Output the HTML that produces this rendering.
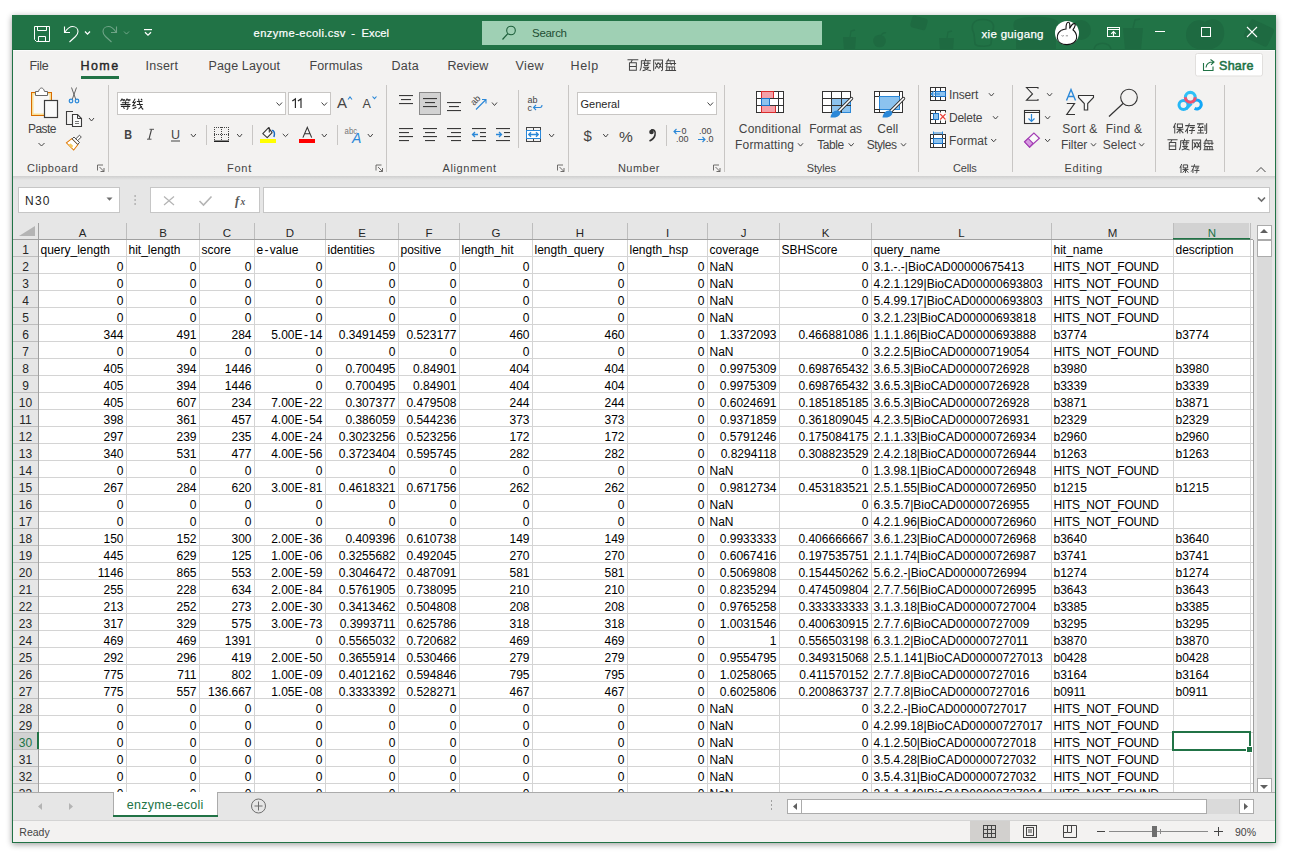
<!DOCTYPE html><html><head><meta charset="utf-8"><style>html,body{margin:0;padding:0;background:#fff;width:1289px;height:859px;overflow:hidden}</style></head><body><svg width="1289" height="859" viewBox="0 0 1289 859" style="display:block;font-family:'Liberation Sans',sans-serif"><defs><filter id="sh" x="-5%" y="-5%" width="110%" height="110%"><feGaussianBlur stdDeviation="3.2"/></filter><linearGradient id="rs" x1="0" y1="0" x2="0" y2="1"><stop offset="0" stop-color="#cfcfcf"/><stop offset="1" stop-color="#e6e6e6"/></linearGradient></defs><rect x="12" y="16.5" width="1264" height="828" fill="#000" opacity="0.38" filter="url(#sh)"/><rect x="12" y="15" width="1264" height="828" fill="#217346" /><rect x="12" y="15" width="1264" height="35" fill="#217346" /><rect x="13" y="50" width="1262" height="126" fill="#f3f2f1" /><rect x="13" y="49" width="1262" height="1" fill="#1f6b41" /><rect x="13" y="50" width="1262" height="1" fill="#fbfbfb" /><rect x="13" y="176" width="1262" height="47" fill="#e6e6e6" /><rect x="13" y="176" width="1262" height="4" fill="url(#rs)" /><rect x="13" y="223" width="1262" height="569" fill="#e6e6e6" /><rect x="13" y="792" width="1262" height="28" fill="#e6e6e6" /><rect x="13" y="792" width="1262" height="1" fill="#ababab" /><rect x="13" y="820" width="1262" height="1" fill="#d4d4d4" /><rect x="13" y="821" width="1262" height="21" fill="#f3f2f1" /><clipPath id="tbclip"><rect x="13" y="15" width="1262" height="34"/></clipPath><g fill="#1e6a41" stroke="none" clip-path="url(#tbclip)"><path d="M843 37 H856 L855 50 H844 Z"/><path d="M850 37 L851 31 L855 30" fill="none" stroke="#1e6a41" stroke-width="1.3"/><circle cx="879.5" cy="41" r="6.3"/><path d="M881 35 Q884 32 886 33" fill="none" stroke="#1e6a41" stroke-width="1.3"/><rect x="911" y="17" width="16" height="12" rx="3" transform="rotate(15 919 23)"/><path d="M939 38 H954 L953 50 H940 Z"/><path d="M947 38 L948 32 L952 31" fill="none" stroke="#1e6a41" stroke-width="1.3"/><path d="M973 24 C976 18 990 18 993 24 C995 28 992 31 992 34 L991 44 C990 47 977 47 975 44 L974 34 C973 31 971 28 973 24 Z" fill="none" stroke="#1e6a41" stroke-width="1.6"/><path d="M1014 22 C1016 15 1055 15 1058 22 C1060 28 1056 32 1056 36 V50 H1016 V36 C1016 32 1012 28 1014 22 Z"/><circle cx="1081" cy="30" r="10"/><path d="M1094 50 C1094 41 1111 41 1111 50 Z" fill="none" stroke="#1e6a41" stroke-width="1.6"/><path d="M1123 28 H1143 L1141 50 H1125 Z"/><path d="M1133 28 L1135 20 L1140 19" fill="none" stroke="#1e6a41" stroke-width="1.5"/><path d="M1205 22 C1215 15 1226 22 1224 36 C1222 47 1212 50 1205 50 C1196 50 1186 46 1186 35 C1186 24 1196 17 1205 22 Z"/><rect x="1246" y="23" width="26" height="20" rx="3" transform="rotate(25 1259 33)"/></g><rect x="482" y="21" width="340" height="24" fill="#9fd0b4" /><text x="253.6" y="37" font-size="11.2" fill="#fff" text-anchor="start" font-weight="normal" stroke="#fff" stroke-width="0.2" textLength="91.8" lengthAdjust="spacing">enzyme-ecoli.csv</text><text x="351.2" y="37" font-size="11.2" fill="#fff" text-anchor="start" font-weight="normal" stroke="#fff" stroke-width="0.2">-</text><text x="361.6" y="37" font-size="11.2" fill="#fff" text-anchor="start" font-weight="normal" stroke="#fff" stroke-width="0.2" textLength="27.4" lengthAdjust="spacing">Excel</text><text x="532" y="37" font-size="11.5" fill="#1e4e33" text-anchor="start" font-weight="normal"  textLength="35" lengthAdjust="spacing">Search</text><text x="981.5" y="38" font-size="11.5" fill="#fff" text-anchor="start" font-weight="normal" stroke="#fff" stroke-width="0.25" textLength="62" lengthAdjust="spacing">xie guigang</text><text x="29.5" y="70" font-size="12.5" fill="#444" text-anchor="start" font-weight="normal"  textLength="19.3" lengthAdjust="spacing">File</text><text x="80.5" y="70" font-size="12.5" fill="#262626" text-anchor="start" font-weight="normal" stroke="#262626" stroke-width="0.4" textLength="37.6" lengthAdjust="spacing">Home</text><text x="145.5" y="70" font-size="12.5" fill="#444" text-anchor="start" font-weight="normal"  textLength="32.5" lengthAdjust="spacing">Insert</text><text x="208.5" y="70" font-size="12.5" fill="#444" text-anchor="start" font-weight="normal"  textLength="71.6" lengthAdjust="spacing">Page Layout</text><text x="309.5" y="70" font-size="12.5" fill="#444" text-anchor="start" font-weight="normal"  textLength="53" lengthAdjust="spacing">Formulas</text><text x="391.5" y="70" font-size="12.5" fill="#444" text-anchor="start" font-weight="normal"  textLength="27.1" lengthAdjust="spacing">Data</text><text x="447.5" y="70" font-size="12.5" fill="#444" text-anchor="start" font-weight="normal"  textLength="40.7" lengthAdjust="spacing">Review</text><text x="515.5" y="70" font-size="12.5" fill="#444" text-anchor="start" font-weight="normal"  textLength="28" lengthAdjust="spacing">View</text><text x="570.5" y="70" font-size="12.5" fill="#444" text-anchor="start" font-weight="normal"  textLength="27.7" lengthAdjust="spacing">Help</text><rect x="81" y="76" width="38" height="3" fill="#217346" /><rect x="1195.5" y="53.5" width="67" height="22.5" fill="#fff" stroke="#e1dfdd" stroke-width="1" rx="2"/><text x="1219" y="70" font-size="12.5" fill="#217346" text-anchor="start" font-weight="normal" stroke="#217346" stroke-width="0.55" textLength="34.5" lengthAdjust="spacing">Share</text><text x="27.0" y="172" font-size="11" fill="#444" text-anchor="start" font-weight="normal"  textLength="50.9" lengthAdjust="spacing">Clipboard</text><text x="226.9" y="172" font-size="11" fill="#444" text-anchor="start" font-weight="normal"  textLength="24.3" lengthAdjust="spacing">Font</text><text x="442.59999999999997" y="172" font-size="11" fill="#444" text-anchor="start" font-weight="normal"  textLength="53.5" lengthAdjust="spacing">Alignment</text><text x="617.9" y="172" font-size="11" fill="#444" text-anchor="start" font-weight="normal"  textLength="41.6" lengthAdjust="spacing">Number</text><text x="806.6999999999999" y="172" font-size="11" fill="#444" text-anchor="start" font-weight="normal"  textLength="29.3" lengthAdjust="spacing">Styles</text><text x="952.9" y="172" font-size="11" fill="#444" text-anchor="start" font-weight="normal"  textLength="23.9" lengthAdjust="spacing">Cells</text><text x="1064.6000000000001" y="172" font-size="11" fill="#444" text-anchor="start" font-weight="normal"  textLength="37.5" lengthAdjust="spacing">Editing</text><rect x="108" y="85" width="1" height="87" fill="#c8c6c4" /><rect x="386" y="85" width="1" height="87" fill="#c8c6c4" /><rect x="568" y="85" width="1" height="87" fill="#c8c6c4" /><rect x="724" y="85" width="1" height="87" fill="#c8c6c4" /><rect x="918" y="85" width="1" height="87" fill="#c8c6c4" /><rect x="1012" y="85" width="1" height="87" fill="#c8c6c4" /><rect x="1155" y="85" width="1" height="87" fill="#c8c6c4" /><rect x="1224" y="85" width="1" height="87" fill="#c8c6c4" /><text x="27.9" y="133" font-size="12" fill="#444" text-anchor="start" font-weight="normal"  textLength="28.6" lengthAdjust="spacing">Paste</text><text x="738.8" y="133" font-size="12" fill="#444" text-anchor="start" font-weight="normal"  textLength="62.2" lengthAdjust="spacing">Conditional</text><text x="735" y="149" font-size="12" fill="#444" text-anchor="start" font-weight="normal"  textLength="59" lengthAdjust="spacing">Formatting</text><text x="809.3" y="133" font-size="12" fill="#444" text-anchor="start" font-weight="normal"  textLength="52.8" lengthAdjust="spacing">Format as</text><text x="817.2" y="149" font-size="12" fill="#444" text-anchor="start" font-weight="normal"  textLength="26.9" lengthAdjust="spacing">Table</text><text x="877.3" y="133" font-size="12" fill="#444" text-anchor="start" font-weight="normal"  textLength="20.9" lengthAdjust="spacing">Cell</text><text x="866.8" y="149" font-size="12" fill="#444" text-anchor="start" font-weight="normal"  textLength="30.1" lengthAdjust="spacing">Styles</text><text x="949" y="99" font-size="12" fill="#444" text-anchor="start" font-weight="normal"  textLength="29.3" lengthAdjust="spacing">Insert</text><text x="949" y="122" font-size="12" fill="#444" text-anchor="start" font-weight="normal"  textLength="33.4" lengthAdjust="spacing">Delete</text><text x="949" y="145" font-size="12" fill="#444" text-anchor="start" font-weight="normal"  textLength="38.3" lengthAdjust="spacing">Format</text><text x="1062.3" y="133" font-size="12" fill="#444" text-anchor="start" font-weight="normal"  textLength="34.9" lengthAdjust="spacing">Sort &amp;</text><text x="1061.1" y="149" font-size="12" fill="#444" text-anchor="start" font-weight="normal"  textLength="26.1" lengthAdjust="spacing">Filter</text><text x="1105.7" y="133" font-size="12" fill="#444" text-anchor="start" font-weight="normal"  textLength="36.4" lengthAdjust="spacing">Find &amp;</text><text x="1102.7" y="149" font-size="12" fill="#444" text-anchor="start" font-weight="normal"  textLength="33.5" lengthAdjust="spacing">Select</text><rect x="117.5" y="92.5" width="168" height="22" fill="#fff" stroke="#c8c6c4"/><rect x="288.5" y="92.5" width="42" height="22" fill="#fff" stroke="#c8c6c4"/><path d="M292.3 101 L295.4 98.9 V108 M297.9 101 L301 98.9 V108" fill="none" stroke="#262626" stroke-width="1.15"/><rect x="577.5" y="92.5" width="139" height="22" fill="#fff" stroke="#c8c6c4"/><text x="580.5" y="108" font-size="11" fill="#262626" text-anchor="start" font-weight="normal" >General</text><rect x="419.5" y="92.5" width="21" height="22" fill="#d2d2d2" stroke="#8a8a8a"/><rect x="18.5" y="187.5" width="101" height="25" fill="#fff" stroke="#c6c6c6"/><text x="25" y="205" font-size="12" fill="#262626" text-anchor="start" font-weight="normal"  textLength="24.5" lengthAdjust="spacing">N30</text><rect x="150.5" y="187.5" width="109" height="25" fill="#fff" stroke="#c6c6c6"/><rect x="263.5" y="187.5" width="1006" height="25" fill="#fff" stroke="#c6c6c6"/><rect x="39" y="240" width="1214" height="552" fill="#fff" /><rect x="13" y="223" width="1240" height="16" fill="#e6e6e6" /><rect x="13" y="239" width="25" height="553" fill="#e6e6e6" /><rect x="1173" y="223" width="76" height="16" fill="#d2d2d2" /><rect x="13" y="733" width="25" height="16" fill="#d2d2d2" /><rect x="126" y="240" width="1" height="552" fill="#d4d4d4" /><rect x="126" y="223" width="1" height="16" fill="#bdbdbd" /><rect x="199" y="240" width="1" height="552" fill="#d4d4d4" /><rect x="199" y="223" width="1" height="16" fill="#bdbdbd" /><rect x="254" y="240" width="1" height="552" fill="#d4d4d4" /><rect x="254" y="223" width="1" height="16" fill="#bdbdbd" /><rect x="325" y="240" width="1" height="552" fill="#d4d4d4" /><rect x="325" y="223" width="1" height="16" fill="#bdbdbd" /><rect x="398" y="240" width="1" height="552" fill="#d4d4d4" /><rect x="398" y="223" width="1" height="16" fill="#bdbdbd" /><rect x="459" y="240" width="1" height="552" fill="#d4d4d4" /><rect x="459" y="223" width="1" height="16" fill="#bdbdbd" /><rect x="532" y="240" width="1" height="552" fill="#d4d4d4" /><rect x="532" y="223" width="1" height="16" fill="#bdbdbd" /><rect x="627" y="240" width="1" height="552" fill="#d4d4d4" /><rect x="627" y="223" width="1" height="16" fill="#bdbdbd" /><rect x="707" y="240" width="1" height="552" fill="#d4d4d4" /><rect x="707" y="223" width="1" height="16" fill="#bdbdbd" /><rect x="779" y="240" width="1" height="552" fill="#d4d4d4" /><rect x="779" y="223" width="1" height="16" fill="#bdbdbd" /><rect x="871" y="240" width="1" height="552" fill="#d4d4d4" /><rect x="871" y="223" width="1" height="16" fill="#bdbdbd" /><rect x="1051" y="240" width="1" height="552" fill="#d4d4d4" /><rect x="1051" y="223" width="1" height="16" fill="#bdbdbd" /><rect x="1173" y="240" width="1" height="552" fill="#d4d4d4" /><rect x="1173" y="223" width="1" height="16" fill="#bdbdbd" /><rect x="1250" y="240" width="1" height="552" fill="#d4d4d4" /><rect x="1250" y="223" width="1" height="16" fill="#bdbdbd" /><rect x="1253" y="240" width="1" height="552" fill="#a0a0a0" /><rect x="39" y="256" width="1214" height="1" fill="#d4d4d4" /><rect x="13" y="256" width="25" height="1" fill="#bdbdbd" /><rect x="39" y="273" width="1214" height="1" fill="#d4d4d4" /><rect x="13" y="273" width="25" height="1" fill="#bdbdbd" /><rect x="39" y="290" width="1214" height="1" fill="#d4d4d4" /><rect x="13" y="290" width="25" height="1" fill="#bdbdbd" /><rect x="39" y="307" width="1214" height="1" fill="#d4d4d4" /><rect x="13" y="307" width="25" height="1" fill="#bdbdbd" /><rect x="39" y="324" width="1214" height="1" fill="#d4d4d4" /><rect x="13" y="324" width="25" height="1" fill="#bdbdbd" /><rect x="39" y="341" width="1214" height="1" fill="#d4d4d4" /><rect x="13" y="341" width="25" height="1" fill="#bdbdbd" /><rect x="39" y="358" width="1214" height="1" fill="#d4d4d4" /><rect x="13" y="358" width="25" height="1" fill="#bdbdbd" /><rect x="39" y="375" width="1214" height="1" fill="#d4d4d4" /><rect x="13" y="375" width="25" height="1" fill="#bdbdbd" /><rect x="39" y="392" width="1214" height="1" fill="#d4d4d4" /><rect x="13" y="392" width="25" height="1" fill="#bdbdbd" /><rect x="39" y="409" width="1214" height="1" fill="#d4d4d4" /><rect x="13" y="409" width="25" height="1" fill="#bdbdbd" /><rect x="39" y="426" width="1214" height="1" fill="#d4d4d4" /><rect x="13" y="426" width="25" height="1" fill="#bdbdbd" /><rect x="39" y="443" width="1214" height="1" fill="#d4d4d4" /><rect x="13" y="443" width="25" height="1" fill="#bdbdbd" /><rect x="39" y="460" width="1214" height="1" fill="#d4d4d4" /><rect x="13" y="460" width="25" height="1" fill="#bdbdbd" /><rect x="39" y="477" width="1214" height="1" fill="#d4d4d4" /><rect x="13" y="477" width="25" height="1" fill="#bdbdbd" /><rect x="39" y="494" width="1214" height="1" fill="#d4d4d4" /><rect x="13" y="494" width="25" height="1" fill="#bdbdbd" /><rect x="39" y="511" width="1214" height="1" fill="#d4d4d4" /><rect x="13" y="511" width="25" height="1" fill="#bdbdbd" /><rect x="39" y="528" width="1214" height="1" fill="#d4d4d4" /><rect x="13" y="528" width="25" height="1" fill="#bdbdbd" /><rect x="39" y="545" width="1214" height="1" fill="#d4d4d4" /><rect x="13" y="545" width="25" height="1" fill="#bdbdbd" /><rect x="39" y="562" width="1214" height="1" fill="#d4d4d4" /><rect x="13" y="562" width="25" height="1" fill="#bdbdbd" /><rect x="39" y="579" width="1214" height="1" fill="#d4d4d4" /><rect x="13" y="579" width="25" height="1" fill="#bdbdbd" /><rect x="39" y="596" width="1214" height="1" fill="#d4d4d4" /><rect x="13" y="596" width="25" height="1" fill="#bdbdbd" /><rect x="39" y="613" width="1214" height="1" fill="#d4d4d4" /><rect x="13" y="613" width="25" height="1" fill="#bdbdbd" /><rect x="39" y="630" width="1214" height="1" fill="#d4d4d4" /><rect x="13" y="630" width="25" height="1" fill="#bdbdbd" /><rect x="39" y="647" width="1214" height="1" fill="#d4d4d4" /><rect x="13" y="647" width="25" height="1" fill="#bdbdbd" /><rect x="39" y="664" width="1214" height="1" fill="#d4d4d4" /><rect x="13" y="664" width="25" height="1" fill="#bdbdbd" /><rect x="39" y="681" width="1214" height="1" fill="#d4d4d4" /><rect x="13" y="681" width="25" height="1" fill="#bdbdbd" /><rect x="39" y="698" width="1214" height="1" fill="#d4d4d4" /><rect x="13" y="698" width="25" height="1" fill="#bdbdbd" /><rect x="39" y="715" width="1214" height="1" fill="#d4d4d4" /><rect x="13" y="715" width="25" height="1" fill="#bdbdbd" /><rect x="39" y="732" width="1214" height="1" fill="#d4d4d4" /><rect x="13" y="732" width="25" height="1" fill="#bdbdbd" /><rect x="39" y="749" width="1214" height="1" fill="#d4d4d4" /><rect x="13" y="749" width="25" height="1" fill="#bdbdbd" /><rect x="39" y="766" width="1214" height="1" fill="#d4d4d4" /><rect x="13" y="766" width="25" height="1" fill="#bdbdbd" /><rect x="39" y="783" width="1214" height="1" fill="#d4d4d4" /><rect x="13" y="783" width="25" height="1" fill="#bdbdbd" /><rect x="13" y="239" width="1240" height="1" fill="#a0a0a0" /><rect x="38" y="223" width="1" height="569" fill="#a0a0a0" /><path d="M19 236 L35 236 L35 226 Z" fill="#b4b4b4"/><text x="82.5" y="236.5" font-size="11.5" fill="#262626" text-anchor="middle" font-weight="normal" >A</text><text x="163.0" y="236.5" font-size="11.5" fill="#262626" text-anchor="middle" font-weight="normal" >B</text><text x="227.0" y="236.5" font-size="11.5" fill="#262626" text-anchor="middle" font-weight="normal" >C</text><text x="290.0" y="236.5" font-size="11.5" fill="#262626" text-anchor="middle" font-weight="normal" >D</text><text x="362.0" y="236.5" font-size="11.5" fill="#262626" text-anchor="middle" font-weight="normal" >E</text><text x="429.0" y="236.5" font-size="11.5" fill="#262626" text-anchor="middle" font-weight="normal" >F</text><text x="496.0" y="236.5" font-size="11.5" fill="#262626" text-anchor="middle" font-weight="normal" >G</text><text x="580.0" y="236.5" font-size="11.5" fill="#262626" text-anchor="middle" font-weight="normal" >H</text><text x="667.5" y="236.5" font-size="11.5" fill="#262626" text-anchor="middle" font-weight="normal" >I</text><text x="743.5" y="236.5" font-size="11.5" fill="#262626" text-anchor="middle" font-weight="normal" >J</text><text x="825.5" y="236.5" font-size="11.5" fill="#262626" text-anchor="middle" font-weight="normal" >K</text><text x="961.5" y="236.5" font-size="11.5" fill="#262626" text-anchor="middle" font-weight="normal" >L</text><text x="1112.5" y="236.5" font-size="11.5" fill="#262626" text-anchor="middle" font-weight="normal" >M</text><text x="1212.0" y="236.5" font-size="11.5" fill="#217346" text-anchor="middle" font-weight="normal" >N</text><rect x="1173" y="238" width="77" height="1.6" fill="#217346" /><g clip-path="url(#rhclip)"><text x="25.5" y="254" font-size="12" fill="#262626" text-anchor="middle" font-weight="normal" >1</text><text x="25.5" y="271" font-size="12" fill="#262626" text-anchor="middle" font-weight="normal" >2</text><text x="25.5" y="288" font-size="12" fill="#262626" text-anchor="middle" font-weight="normal" >3</text><text x="25.5" y="305" font-size="12" fill="#262626" text-anchor="middle" font-weight="normal" >4</text><text x="25.5" y="322" font-size="12" fill="#262626" text-anchor="middle" font-weight="normal" >5</text><text x="25.5" y="339" font-size="12" fill="#262626" text-anchor="middle" font-weight="normal" >6</text><text x="25.5" y="356" font-size="12" fill="#262626" text-anchor="middle" font-weight="normal" >7</text><text x="25.5" y="373" font-size="12" fill="#262626" text-anchor="middle" font-weight="normal" >8</text><text x="25.5" y="390" font-size="12" fill="#262626" text-anchor="middle" font-weight="normal" >9</text><text x="25.5" y="407" font-size="12" fill="#262626" text-anchor="middle" font-weight="normal" >10</text><text x="25.5" y="424" font-size="12" fill="#262626" text-anchor="middle" font-weight="normal" >11</text><text x="25.5" y="441" font-size="12" fill="#262626" text-anchor="middle" font-weight="normal" >12</text><text x="25.5" y="458" font-size="12" fill="#262626" text-anchor="middle" font-weight="normal" >13</text><text x="25.5" y="475" font-size="12" fill="#262626" text-anchor="middle" font-weight="normal" >14</text><text x="25.5" y="492" font-size="12" fill="#262626" text-anchor="middle" font-weight="normal" >15</text><text x="25.5" y="509" font-size="12" fill="#262626" text-anchor="middle" font-weight="normal" >16</text><text x="25.5" y="526" font-size="12" fill="#262626" text-anchor="middle" font-weight="normal" >17</text><text x="25.5" y="543" font-size="12" fill="#262626" text-anchor="middle" font-weight="normal" >18</text><text x="25.5" y="560" font-size="12" fill="#262626" text-anchor="middle" font-weight="normal" >19</text><text x="25.5" y="577" font-size="12" fill="#262626" text-anchor="middle" font-weight="normal" >20</text><text x="25.5" y="594" font-size="12" fill="#262626" text-anchor="middle" font-weight="normal" >21</text><text x="25.5" y="611" font-size="12" fill="#262626" text-anchor="middle" font-weight="normal" >22</text><text x="25.5" y="628" font-size="12" fill="#262626" text-anchor="middle" font-weight="normal" >23</text><text x="25.5" y="645" font-size="12" fill="#262626" text-anchor="middle" font-weight="normal" >24</text><text x="25.5" y="662" font-size="12" fill="#262626" text-anchor="middle" font-weight="normal" >25</text><text x="25.5" y="679" font-size="12" fill="#262626" text-anchor="middle" font-weight="normal" >26</text><text x="25.5" y="696" font-size="12" fill="#262626" text-anchor="middle" font-weight="normal" >27</text><text x="25.5" y="713" font-size="12" fill="#262626" text-anchor="middle" font-weight="normal" >28</text><text x="25.5" y="730" font-size="12" fill="#262626" text-anchor="middle" font-weight="normal" >29</text><text x="25.5" y="747" font-size="12" fill="#217346" text-anchor="middle" font-weight="normal" >30</text><text x="25.5" y="764" font-size="12" fill="#262626" text-anchor="middle" font-weight="normal" >31</text><text x="25.5" y="781" font-size="12" fill="#262626" text-anchor="middle" font-weight="normal" >32</text><text x="25.5" y="798" font-size="12" fill="#262626" text-anchor="middle" font-weight="normal" >33</text></g><clipPath id="rhclip"><rect x="13" y="240" width="25" height="552"/></clipPath><rect x="37" y="732" width="2" height="17" fill="#217346" /><g clip-path="url(#gridclip)"><text x="40.5" y="254" font-size="12" fill="#000" text-anchor="start" font-weight="normal" >query_length</text><text x="128.5" y="254" font-size="12" fill="#000" text-anchor="start" font-weight="normal" >hit_length</text><text x="201.5" y="254" font-size="12" fill="#000" text-anchor="start" font-weight="normal" >score</text><text x="256.5" y="254" font-size="12" fill="#000">e<tspan dx="1.4">-</tspan><tspan dx="1.2">value</tspan></text><text x="327.5" y="254" font-size="12" fill="#000" text-anchor="start" font-weight="normal" >identities</text><text x="400.5" y="254" font-size="12" fill="#000" text-anchor="start" font-weight="normal" >positive</text><text x="461.5" y="254" font-size="12" fill="#000" text-anchor="start" font-weight="normal" >length_hit</text><text x="534.5" y="254" font-size="12" fill="#000" text-anchor="start" font-weight="normal" >length_query</text><text x="629.5" y="254" font-size="12" fill="#000" text-anchor="start" font-weight="normal" >length_hsp</text><text x="709.5" y="254" font-size="12" fill="#000" text-anchor="start" font-weight="normal" >coverage</text><text x="781.5" y="254" font-size="12" fill="#000" text-anchor="start" font-weight="normal" >SBHScore</text><text x="873.5" y="254" font-size="12" fill="#000" text-anchor="start" font-weight="normal" >query_name</text><text x="1053.5" y="254" font-size="12" fill="#000" text-anchor="start" font-weight="normal" >hit_name</text><text x="1175.5" y="254" font-size="12" fill="#000" text-anchor="start" font-weight="normal" >description</text><text x="123.5" y="271" font-size="12" fill="#000" text-anchor="end" font-weight="normal" >0</text><text x="196.5" y="271" font-size="12" fill="#000" text-anchor="end" font-weight="normal" >0</text><text x="251.5" y="271" font-size="12" fill="#000" text-anchor="end" font-weight="normal" >0</text><text x="322.5" y="271" font-size="12" fill="#000" text-anchor="end" font-weight="normal" >0</text><text x="395.5" y="271" font-size="12" fill="#000" text-anchor="end" font-weight="normal" >0</text><text x="456.5" y="271" font-size="12" fill="#000" text-anchor="end" font-weight="normal" >0</text><text x="529.5" y="271" font-size="12" fill="#000" text-anchor="end" font-weight="normal" >0</text><text x="624.5" y="271" font-size="12" fill="#000" text-anchor="end" font-weight="normal" >0</text><text x="704.5" y="271" font-size="12" fill="#000" text-anchor="end" font-weight="normal" >0</text><text x="709.5" y="271" font-size="12" fill="#000" text-anchor="start" font-weight="normal" >NaN</text><text x="868.5" y="271" font-size="12" fill="#000" text-anchor="end" font-weight="normal" >0</text><text x="873.5" y="271" font-size="12" fill="#000" text-anchor="start" font-weight="normal" >3.1.-.-|BioCAD00000675413</text><text x="1053.5" y="271" font-size="12" fill="#000" text-anchor="start" font-weight="normal"  textLength="105.5" lengthAdjust="spacing">HITS_NOT_FOUND</text><text x="123.5" y="288" font-size="12" fill="#000" text-anchor="end" font-weight="normal" >0</text><text x="196.5" y="288" font-size="12" fill="#000" text-anchor="end" font-weight="normal" >0</text><text x="251.5" y="288" font-size="12" fill="#000" text-anchor="end" font-weight="normal" >0</text><text x="322.5" y="288" font-size="12" fill="#000" text-anchor="end" font-weight="normal" >0</text><text x="395.5" y="288" font-size="12" fill="#000" text-anchor="end" font-weight="normal" >0</text><text x="456.5" y="288" font-size="12" fill="#000" text-anchor="end" font-weight="normal" >0</text><text x="529.5" y="288" font-size="12" fill="#000" text-anchor="end" font-weight="normal" >0</text><text x="624.5" y="288" font-size="12" fill="#000" text-anchor="end" font-weight="normal" >0</text><text x="704.5" y="288" font-size="12" fill="#000" text-anchor="end" font-weight="normal" >0</text><text x="709.5" y="288" font-size="12" fill="#000" text-anchor="start" font-weight="normal" >NaN</text><text x="868.5" y="288" font-size="12" fill="#000" text-anchor="end" font-weight="normal" >0</text><text x="873.5" y="288" font-size="12" fill="#000" text-anchor="start" font-weight="normal" >4.2.1.129|BioCAD00000693803</text><text x="1053.5" y="288" font-size="12" fill="#000" text-anchor="start" font-weight="normal"  textLength="105.5" lengthAdjust="spacing">HITS_NOT_FOUND</text><text x="123.5" y="305" font-size="12" fill="#000" text-anchor="end" font-weight="normal" >0</text><text x="196.5" y="305" font-size="12" fill="#000" text-anchor="end" font-weight="normal" >0</text><text x="251.5" y="305" font-size="12" fill="#000" text-anchor="end" font-weight="normal" >0</text><text x="322.5" y="305" font-size="12" fill="#000" text-anchor="end" font-weight="normal" >0</text><text x="395.5" y="305" font-size="12" fill="#000" text-anchor="end" font-weight="normal" >0</text><text x="456.5" y="305" font-size="12" fill="#000" text-anchor="end" font-weight="normal" >0</text><text x="529.5" y="305" font-size="12" fill="#000" text-anchor="end" font-weight="normal" >0</text><text x="624.5" y="305" font-size="12" fill="#000" text-anchor="end" font-weight="normal" >0</text><text x="704.5" y="305" font-size="12" fill="#000" text-anchor="end" font-weight="normal" >0</text><text x="709.5" y="305" font-size="12" fill="#000" text-anchor="start" font-weight="normal" >NaN</text><text x="868.5" y="305" font-size="12" fill="#000" text-anchor="end" font-weight="normal" >0</text><text x="873.5" y="305" font-size="12" fill="#000" text-anchor="start" font-weight="normal" >5.4.99.17|BioCAD00000693803</text><text x="1053.5" y="305" font-size="12" fill="#000" text-anchor="start" font-weight="normal"  textLength="105.5" lengthAdjust="spacing">HITS_NOT_FOUND</text><text x="123.5" y="322" font-size="12" fill="#000" text-anchor="end" font-weight="normal" >0</text><text x="196.5" y="322" font-size="12" fill="#000" text-anchor="end" font-weight="normal" >0</text><text x="251.5" y="322" font-size="12" fill="#000" text-anchor="end" font-weight="normal" >0</text><text x="322.5" y="322" font-size="12" fill="#000" text-anchor="end" font-weight="normal" >0</text><text x="395.5" y="322" font-size="12" fill="#000" text-anchor="end" font-weight="normal" >0</text><text x="456.5" y="322" font-size="12" fill="#000" text-anchor="end" font-weight="normal" >0</text><text x="529.5" y="322" font-size="12" fill="#000" text-anchor="end" font-weight="normal" >0</text><text x="624.5" y="322" font-size="12" fill="#000" text-anchor="end" font-weight="normal" >0</text><text x="704.5" y="322" font-size="12" fill="#000" text-anchor="end" font-weight="normal" >0</text><text x="709.5" y="322" font-size="12" fill="#000" text-anchor="start" font-weight="normal" >NaN</text><text x="868.5" y="322" font-size="12" fill="#000" text-anchor="end" font-weight="normal" >0</text><text x="873.5" y="322" font-size="12" fill="#000" text-anchor="start" font-weight="normal" >3.2.1.23|BioCAD00000693818</text><text x="1053.5" y="322" font-size="12" fill="#000" text-anchor="start" font-weight="normal"  textLength="105.5" lengthAdjust="spacing">HITS_NOT_FOUND</text><text x="123.5" y="339" font-size="12" fill="#000" text-anchor="end" font-weight="normal" >344</text><text x="196.5" y="339" font-size="12" fill="#000" text-anchor="end" font-weight="normal" >491</text><text x="251.5" y="339" font-size="12" fill="#000" text-anchor="end" font-weight="normal" >284</text><text x="322.5" y="339" font-size="12" fill="#000" text-anchor="end">5.00E<tspan dx="1.4">-</tspan><tspan dx="1.2">14</tspan></text><text x="395.5" y="339" font-size="12" fill="#000" text-anchor="end" font-weight="normal" >0.3491459</text><text x="456.5" y="339" font-size="12" fill="#000" text-anchor="end" font-weight="normal" >0.523177</text><text x="529.5" y="339" font-size="12" fill="#000" text-anchor="end" font-weight="normal" >460</text><text x="624.5" y="339" font-size="12" fill="#000" text-anchor="end" font-weight="normal" >460</text><text x="704.5" y="339" font-size="12" fill="#000" text-anchor="end" font-weight="normal" >0</text><text x="776.5" y="339" font-size="12" fill="#000" text-anchor="end" font-weight="normal" >1.3372093</text><text x="868.5" y="339" font-size="12" fill="#000" text-anchor="end" font-weight="normal" >0.466881086</text><text x="873.5" y="339" font-size="12" fill="#000" text-anchor="start" font-weight="normal" >1.1.1.86|BioCAD00000693888</text><text x="1053.5" y="339" font-size="12" fill="#000" text-anchor="start" font-weight="normal" >b3774</text><text x="1175.5" y="339" font-size="12" fill="#000" text-anchor="start" font-weight="normal" >b3774</text><text x="123.5" y="356" font-size="12" fill="#000" text-anchor="end" font-weight="normal" >0</text><text x="196.5" y="356" font-size="12" fill="#000" text-anchor="end" font-weight="normal" >0</text><text x="251.5" y="356" font-size="12" fill="#000" text-anchor="end" font-weight="normal" >0</text><text x="322.5" y="356" font-size="12" fill="#000" text-anchor="end" font-weight="normal" >0</text><text x="395.5" y="356" font-size="12" fill="#000" text-anchor="end" font-weight="normal" >0</text><text x="456.5" y="356" font-size="12" fill="#000" text-anchor="end" font-weight="normal" >0</text><text x="529.5" y="356" font-size="12" fill="#000" text-anchor="end" font-weight="normal" >0</text><text x="624.5" y="356" font-size="12" fill="#000" text-anchor="end" font-weight="normal" >0</text><text x="704.5" y="356" font-size="12" fill="#000" text-anchor="end" font-weight="normal" >0</text><text x="709.5" y="356" font-size="12" fill="#000" text-anchor="start" font-weight="normal" >NaN</text><text x="868.5" y="356" font-size="12" fill="#000" text-anchor="end" font-weight="normal" >0</text><text x="873.5" y="356" font-size="12" fill="#000" text-anchor="start" font-weight="normal" >3.2.2.5|BioCAD00000719054</text><text x="1053.5" y="356" font-size="12" fill="#000" text-anchor="start" font-weight="normal"  textLength="105.5" lengthAdjust="spacing">HITS_NOT_FOUND</text><text x="123.5" y="373" font-size="12" fill="#000" text-anchor="end" font-weight="normal" >405</text><text x="196.5" y="373" font-size="12" fill="#000" text-anchor="end" font-weight="normal" >394</text><text x="251.5" y="373" font-size="12" fill="#000" text-anchor="end" font-weight="normal" >1446</text><text x="322.5" y="373" font-size="12" fill="#000" text-anchor="end" font-weight="normal" >0</text><text x="395.5" y="373" font-size="12" fill="#000" text-anchor="end" font-weight="normal" >0.700495</text><text x="456.5" y="373" font-size="12" fill="#000" text-anchor="end" font-weight="normal" >0.84901</text><text x="529.5" y="373" font-size="12" fill="#000" text-anchor="end" font-weight="normal" >404</text><text x="624.5" y="373" font-size="12" fill="#000" text-anchor="end" font-weight="normal" >404</text><text x="704.5" y="373" font-size="12" fill="#000" text-anchor="end" font-weight="normal" >0</text><text x="776.5" y="373" font-size="12" fill="#000" text-anchor="end" font-weight="normal" >0.9975309</text><text x="868.5" y="373" font-size="12" fill="#000" text-anchor="end" font-weight="normal" >0.698765432</text><text x="873.5" y="373" font-size="12" fill="#000" text-anchor="start" font-weight="normal" >3.6.5.3|BioCAD00000726928</text><text x="1053.5" y="373" font-size="12" fill="#000" text-anchor="start" font-weight="normal" >b3980</text><text x="1175.5" y="373" font-size="12" fill="#000" text-anchor="start" font-weight="normal" >b3980</text><text x="123.5" y="390" font-size="12" fill="#000" text-anchor="end" font-weight="normal" >405</text><text x="196.5" y="390" font-size="12" fill="#000" text-anchor="end" font-weight="normal" >394</text><text x="251.5" y="390" font-size="12" fill="#000" text-anchor="end" font-weight="normal" >1446</text><text x="322.5" y="390" font-size="12" fill="#000" text-anchor="end" font-weight="normal" >0</text><text x="395.5" y="390" font-size="12" fill="#000" text-anchor="end" font-weight="normal" >0.700495</text><text x="456.5" y="390" font-size="12" fill="#000" text-anchor="end" font-weight="normal" >0.84901</text><text x="529.5" y="390" font-size="12" fill="#000" text-anchor="end" font-weight="normal" >404</text><text x="624.5" y="390" font-size="12" fill="#000" text-anchor="end" font-weight="normal" >404</text><text x="704.5" y="390" font-size="12" fill="#000" text-anchor="end" font-weight="normal" >0</text><text x="776.5" y="390" font-size="12" fill="#000" text-anchor="end" font-weight="normal" >0.9975309</text><text x="868.5" y="390" font-size="12" fill="#000" text-anchor="end" font-weight="normal" >0.698765432</text><text x="873.5" y="390" font-size="12" fill="#000" text-anchor="start" font-weight="normal" >3.6.5.3|BioCAD00000726928</text><text x="1053.5" y="390" font-size="12" fill="#000" text-anchor="start" font-weight="normal" >b3339</text><text x="1175.5" y="390" font-size="12" fill="#000" text-anchor="start" font-weight="normal" >b3339</text><text x="123.5" y="407" font-size="12" fill="#000" text-anchor="end" font-weight="normal" >405</text><text x="196.5" y="407" font-size="12" fill="#000" text-anchor="end" font-weight="normal" >607</text><text x="251.5" y="407" font-size="12" fill="#000" text-anchor="end" font-weight="normal" >234</text><text x="322.5" y="407" font-size="12" fill="#000" text-anchor="end">7.00E<tspan dx="1.4">-</tspan><tspan dx="1.2">22</tspan></text><text x="395.5" y="407" font-size="12" fill="#000" text-anchor="end" font-weight="normal" >0.307377</text><text x="456.5" y="407" font-size="12" fill="#000" text-anchor="end" font-weight="normal" >0.479508</text><text x="529.5" y="407" font-size="12" fill="#000" text-anchor="end" font-weight="normal" >244</text><text x="624.5" y="407" font-size="12" fill="#000" text-anchor="end" font-weight="normal" >244</text><text x="704.5" y="407" font-size="12" fill="#000" text-anchor="end" font-weight="normal" >0</text><text x="776.5" y="407" font-size="12" fill="#000" text-anchor="end" font-weight="normal" >0.6024691</text><text x="868.5" y="407" font-size="12" fill="#000" text-anchor="end" font-weight="normal" >0.185185185</text><text x="873.5" y="407" font-size="12" fill="#000" text-anchor="start" font-weight="normal" >3.6.5.3|BioCAD00000726928</text><text x="1053.5" y="407" font-size="12" fill="#000" text-anchor="start" font-weight="normal" >b3871</text><text x="1175.5" y="407" font-size="12" fill="#000" text-anchor="start" font-weight="normal" >b3871</text><text x="123.5" y="424" font-size="12" fill="#000" text-anchor="end" font-weight="normal" >398</text><text x="196.5" y="424" font-size="12" fill="#000" text-anchor="end" font-weight="normal" >361</text><text x="251.5" y="424" font-size="12" fill="#000" text-anchor="end" font-weight="normal" >457</text><text x="322.5" y="424" font-size="12" fill="#000" text-anchor="end">4.00E<tspan dx="1.4">-</tspan><tspan dx="1.2">54</tspan></text><text x="395.5" y="424" font-size="12" fill="#000" text-anchor="end" font-weight="normal" >0.386059</text><text x="456.5" y="424" font-size="12" fill="#000" text-anchor="end" font-weight="normal" >0.544236</text><text x="529.5" y="424" font-size="12" fill="#000" text-anchor="end" font-weight="normal" >373</text><text x="624.5" y="424" font-size="12" fill="#000" text-anchor="end" font-weight="normal" >373</text><text x="704.5" y="424" font-size="12" fill="#000" text-anchor="end" font-weight="normal" >0</text><text x="776.5" y="424" font-size="12" fill="#000" text-anchor="end" font-weight="normal" >0.9371859</text><text x="868.5" y="424" font-size="12" fill="#000" text-anchor="end" font-weight="normal" >0.361809045</text><text x="873.5" y="424" font-size="12" fill="#000" text-anchor="start" font-weight="normal" >4.2.3.5|BioCAD00000726931</text><text x="1053.5" y="424" font-size="12" fill="#000" text-anchor="start" font-weight="normal" >b2329</text><text x="1175.5" y="424" font-size="12" fill="#000" text-anchor="start" font-weight="normal" >b2329</text><text x="123.5" y="441" font-size="12" fill="#000" text-anchor="end" font-weight="normal" >297</text><text x="196.5" y="441" font-size="12" fill="#000" text-anchor="end" font-weight="normal" >239</text><text x="251.5" y="441" font-size="12" fill="#000" text-anchor="end" font-weight="normal" >235</text><text x="322.5" y="441" font-size="12" fill="#000" text-anchor="end">4.00E<tspan dx="1.4">-</tspan><tspan dx="1.2">24</tspan></text><text x="395.5" y="441" font-size="12" fill="#000" text-anchor="end" font-weight="normal" >0.3023256</text><text x="456.5" y="441" font-size="12" fill="#000" text-anchor="end" font-weight="normal" >0.523256</text><text x="529.5" y="441" font-size="12" fill="#000" text-anchor="end" font-weight="normal" >172</text><text x="624.5" y="441" font-size="12" fill="#000" text-anchor="end" font-weight="normal" >172</text><text x="704.5" y="441" font-size="12" fill="#000" text-anchor="end" font-weight="normal" >0</text><text x="776.5" y="441" font-size="12" fill="#000" text-anchor="end" font-weight="normal" >0.5791246</text><text x="868.5" y="441" font-size="12" fill="#000" text-anchor="end" font-weight="normal" >0.175084175</text><text x="873.5" y="441" font-size="12" fill="#000" text-anchor="start" font-weight="normal" >2.1.1.33|BioCAD00000726934</text><text x="1053.5" y="441" font-size="12" fill="#000" text-anchor="start" font-weight="normal" >b2960</text><text x="1175.5" y="441" font-size="12" fill="#000" text-anchor="start" font-weight="normal" >b2960</text><text x="123.5" y="458" font-size="12" fill="#000" text-anchor="end" font-weight="normal" >340</text><text x="196.5" y="458" font-size="12" fill="#000" text-anchor="end" font-weight="normal" >531</text><text x="251.5" y="458" font-size="12" fill="#000" text-anchor="end" font-weight="normal" >477</text><text x="322.5" y="458" font-size="12" fill="#000" text-anchor="end">4.00E<tspan dx="1.4">-</tspan><tspan dx="1.2">56</tspan></text><text x="395.5" y="458" font-size="12" fill="#000" text-anchor="end" font-weight="normal" >0.3723404</text><text x="456.5" y="458" font-size="12" fill="#000" text-anchor="end" font-weight="normal" >0.595745</text><text x="529.5" y="458" font-size="12" fill="#000" text-anchor="end" font-weight="normal" >282</text><text x="624.5" y="458" font-size="12" fill="#000" text-anchor="end" font-weight="normal" >282</text><text x="704.5" y="458" font-size="12" fill="#000" text-anchor="end" font-weight="normal" >0</text><text x="776.5" y="458" font-size="12" fill="#000" text-anchor="end" font-weight="normal" >0.8294118</text><text x="868.5" y="458" font-size="12" fill="#000" text-anchor="end" font-weight="normal" >0.308823529</text><text x="873.5" y="458" font-size="12" fill="#000" text-anchor="start" font-weight="normal" >2.4.2.18|BioCAD00000726944</text><text x="1053.5" y="458" font-size="12" fill="#000" text-anchor="start" font-weight="normal" >b1263</text><text x="1175.5" y="458" font-size="12" fill="#000" text-anchor="start" font-weight="normal" >b1263</text><text x="123.5" y="475" font-size="12" fill="#000" text-anchor="end" font-weight="normal" >0</text><text x="196.5" y="475" font-size="12" fill="#000" text-anchor="end" font-weight="normal" >0</text><text x="251.5" y="475" font-size="12" fill="#000" text-anchor="end" font-weight="normal" >0</text><text x="322.5" y="475" font-size="12" fill="#000" text-anchor="end" font-weight="normal" >0</text><text x="395.5" y="475" font-size="12" fill="#000" text-anchor="end" font-weight="normal" >0</text><text x="456.5" y="475" font-size="12" fill="#000" text-anchor="end" font-weight="normal" >0</text><text x="529.5" y="475" font-size="12" fill="#000" text-anchor="end" font-weight="normal" >0</text><text x="624.5" y="475" font-size="12" fill="#000" text-anchor="end" font-weight="normal" >0</text><text x="704.5" y="475" font-size="12" fill="#000" text-anchor="end" font-weight="normal" >0</text><text x="709.5" y="475" font-size="12" fill="#000" text-anchor="start" font-weight="normal" >NaN</text><text x="868.5" y="475" font-size="12" fill="#000" text-anchor="end" font-weight="normal" >0</text><text x="873.5" y="475" font-size="12" fill="#000" text-anchor="start" font-weight="normal" >1.3.98.1|BioCAD00000726948</text><text x="1053.5" y="475" font-size="12" fill="#000" text-anchor="start" font-weight="normal"  textLength="105.5" lengthAdjust="spacing">HITS_NOT_FOUND</text><text x="123.5" y="492" font-size="12" fill="#000" text-anchor="end" font-weight="normal" >267</text><text x="196.5" y="492" font-size="12" fill="#000" text-anchor="end" font-weight="normal" >284</text><text x="251.5" y="492" font-size="12" fill="#000" text-anchor="end" font-weight="normal" >620</text><text x="322.5" y="492" font-size="12" fill="#000" text-anchor="end">3.00E<tspan dx="1.4">-</tspan><tspan dx="1.2">81</tspan></text><text x="395.5" y="492" font-size="12" fill="#000" text-anchor="end" font-weight="normal" >0.4618321</text><text x="456.5" y="492" font-size="12" fill="#000" text-anchor="end" font-weight="normal" >0.671756</text><text x="529.5" y="492" font-size="12" fill="#000" text-anchor="end" font-weight="normal" >262</text><text x="624.5" y="492" font-size="12" fill="#000" text-anchor="end" font-weight="normal" >262</text><text x="704.5" y="492" font-size="12" fill="#000" text-anchor="end" font-weight="normal" >0</text><text x="776.5" y="492" font-size="12" fill="#000" text-anchor="end" font-weight="normal" >0.9812734</text><text x="868.5" y="492" font-size="12" fill="#000" text-anchor="end" font-weight="normal" >0.453183521</text><text x="873.5" y="492" font-size="12" fill="#000" text-anchor="start" font-weight="normal" >2.5.1.55|BioCAD00000726950</text><text x="1053.5" y="492" font-size="12" fill="#000" text-anchor="start" font-weight="normal" >b1215</text><text x="1175.5" y="492" font-size="12" fill="#000" text-anchor="start" font-weight="normal" >b1215</text><text x="123.5" y="509" font-size="12" fill="#000" text-anchor="end" font-weight="normal" >0</text><text x="196.5" y="509" font-size="12" fill="#000" text-anchor="end" font-weight="normal" >0</text><text x="251.5" y="509" font-size="12" fill="#000" text-anchor="end" font-weight="normal" >0</text><text x="322.5" y="509" font-size="12" fill="#000" text-anchor="end" font-weight="normal" >0</text><text x="395.5" y="509" font-size="12" fill="#000" text-anchor="end" font-weight="normal" >0</text><text x="456.5" y="509" font-size="12" fill="#000" text-anchor="end" font-weight="normal" >0</text><text x="529.5" y="509" font-size="12" fill="#000" text-anchor="end" font-weight="normal" >0</text><text x="624.5" y="509" font-size="12" fill="#000" text-anchor="end" font-weight="normal" >0</text><text x="704.5" y="509" font-size="12" fill="#000" text-anchor="end" font-weight="normal" >0</text><text x="709.5" y="509" font-size="12" fill="#000" text-anchor="start" font-weight="normal" >NaN</text><text x="868.5" y="509" font-size="12" fill="#000" text-anchor="end" font-weight="normal" >0</text><text x="873.5" y="509" font-size="12" fill="#000" text-anchor="start" font-weight="normal" >6.3.5.7|BioCAD00000726955</text><text x="1053.5" y="509" font-size="12" fill="#000" text-anchor="start" font-weight="normal"  textLength="105.5" lengthAdjust="spacing">HITS_NOT_FOUND</text><text x="123.5" y="526" font-size="12" fill="#000" text-anchor="end" font-weight="normal" >0</text><text x="196.5" y="526" font-size="12" fill="#000" text-anchor="end" font-weight="normal" >0</text><text x="251.5" y="526" font-size="12" fill="#000" text-anchor="end" font-weight="normal" >0</text><text x="322.5" y="526" font-size="12" fill="#000" text-anchor="end" font-weight="normal" >0</text><text x="395.5" y="526" font-size="12" fill="#000" text-anchor="end" font-weight="normal" >0</text><text x="456.5" y="526" font-size="12" fill="#000" text-anchor="end" font-weight="normal" >0</text><text x="529.5" y="526" font-size="12" fill="#000" text-anchor="end" font-weight="normal" >0</text><text x="624.5" y="526" font-size="12" fill="#000" text-anchor="end" font-weight="normal" >0</text><text x="704.5" y="526" font-size="12" fill="#000" text-anchor="end" font-weight="normal" >0</text><text x="709.5" y="526" font-size="12" fill="#000" text-anchor="start" font-weight="normal" >NaN</text><text x="868.5" y="526" font-size="12" fill="#000" text-anchor="end" font-weight="normal" >0</text><text x="873.5" y="526" font-size="12" fill="#000" text-anchor="start" font-weight="normal" >4.2.1.96|BioCAD00000726960</text><text x="1053.5" y="526" font-size="12" fill="#000" text-anchor="start" font-weight="normal"  textLength="105.5" lengthAdjust="spacing">HITS_NOT_FOUND</text><text x="123.5" y="543" font-size="12" fill="#000" text-anchor="end" font-weight="normal" >150</text><text x="196.5" y="543" font-size="12" fill="#000" text-anchor="end" font-weight="normal" >152</text><text x="251.5" y="543" font-size="12" fill="#000" text-anchor="end" font-weight="normal" >300</text><text x="322.5" y="543" font-size="12" fill="#000" text-anchor="end">2.00E<tspan dx="1.4">-</tspan><tspan dx="1.2">36</tspan></text><text x="395.5" y="543" font-size="12" fill="#000" text-anchor="end" font-weight="normal" >0.409396</text><text x="456.5" y="543" font-size="12" fill="#000" text-anchor="end" font-weight="normal" >0.610738</text><text x="529.5" y="543" font-size="12" fill="#000" text-anchor="end" font-weight="normal" >149</text><text x="624.5" y="543" font-size="12" fill="#000" text-anchor="end" font-weight="normal" >149</text><text x="704.5" y="543" font-size="12" fill="#000" text-anchor="end" font-weight="normal" >0</text><text x="776.5" y="543" font-size="12" fill="#000" text-anchor="end" font-weight="normal" >0.9933333</text><text x="868.5" y="543" font-size="12" fill="#000" text-anchor="end" font-weight="normal" >0.406666667</text><text x="873.5" y="543" font-size="12" fill="#000" text-anchor="start" font-weight="normal" >3.6.1.23|BioCAD00000726968</text><text x="1053.5" y="543" font-size="12" fill="#000" text-anchor="start" font-weight="normal" >b3640</text><text x="1175.5" y="543" font-size="12" fill="#000" text-anchor="start" font-weight="normal" >b3640</text><text x="123.5" y="560" font-size="12" fill="#000" text-anchor="end" font-weight="normal" >445</text><text x="196.5" y="560" font-size="12" fill="#000" text-anchor="end" font-weight="normal" >629</text><text x="251.5" y="560" font-size="12" fill="#000" text-anchor="end" font-weight="normal" >125</text><text x="322.5" y="560" font-size="12" fill="#000" text-anchor="end">1.00E<tspan dx="1.4">-</tspan><tspan dx="1.2">06</tspan></text><text x="395.5" y="560" font-size="12" fill="#000" text-anchor="end" font-weight="normal" >0.3255682</text><text x="456.5" y="560" font-size="12" fill="#000" text-anchor="end" font-weight="normal" >0.492045</text><text x="529.5" y="560" font-size="12" fill="#000" text-anchor="end" font-weight="normal" >270</text><text x="624.5" y="560" font-size="12" fill="#000" text-anchor="end" font-weight="normal" >270</text><text x="704.5" y="560" font-size="12" fill="#000" text-anchor="end" font-weight="normal" >0</text><text x="776.5" y="560" font-size="12" fill="#000" text-anchor="end" font-weight="normal" >0.6067416</text><text x="868.5" y="560" font-size="12" fill="#000" text-anchor="end" font-weight="normal" >0.197535751</text><text x="873.5" y="560" font-size="12" fill="#000" text-anchor="start" font-weight="normal" >2.1.1.74|BioCAD00000726987</text><text x="1053.5" y="560" font-size="12" fill="#000" text-anchor="start" font-weight="normal" >b3741</text><text x="1175.5" y="560" font-size="12" fill="#000" text-anchor="start" font-weight="normal" >b3741</text><text x="123.5" y="577" font-size="12" fill="#000" text-anchor="end" font-weight="normal" >1146</text><text x="196.5" y="577" font-size="12" fill="#000" text-anchor="end" font-weight="normal" >865</text><text x="251.5" y="577" font-size="12" fill="#000" text-anchor="end" font-weight="normal" >553</text><text x="322.5" y="577" font-size="12" fill="#000" text-anchor="end">2.00E<tspan dx="1.4">-</tspan><tspan dx="1.2">59</tspan></text><text x="395.5" y="577" font-size="12" fill="#000" text-anchor="end" font-weight="normal" >0.3046472</text><text x="456.5" y="577" font-size="12" fill="#000" text-anchor="end" font-weight="normal" >0.487091</text><text x="529.5" y="577" font-size="12" fill="#000" text-anchor="end" font-weight="normal" >581</text><text x="624.5" y="577" font-size="12" fill="#000" text-anchor="end" font-weight="normal" >581</text><text x="704.5" y="577" font-size="12" fill="#000" text-anchor="end" font-weight="normal" >0</text><text x="776.5" y="577" font-size="12" fill="#000" text-anchor="end" font-weight="normal" >0.5069808</text><text x="868.5" y="577" font-size="12" fill="#000" text-anchor="end" font-weight="normal" >0.154450262</text><text x="873.5" y="577" font-size="12" fill="#000" text-anchor="start" font-weight="normal" >5.6.2.-|BioCAD00000726994</text><text x="1053.5" y="577" font-size="12" fill="#000" text-anchor="start" font-weight="normal" >b1274</text><text x="1175.5" y="577" font-size="12" fill="#000" text-anchor="start" font-weight="normal" >b1274</text><text x="123.5" y="594" font-size="12" fill="#000" text-anchor="end" font-weight="normal" >255</text><text x="196.5" y="594" font-size="12" fill="#000" text-anchor="end" font-weight="normal" >228</text><text x="251.5" y="594" font-size="12" fill="#000" text-anchor="end" font-weight="normal" >634</text><text x="322.5" y="594" font-size="12" fill="#000" text-anchor="end">2.00E<tspan dx="1.4">-</tspan><tspan dx="1.2">84</tspan></text><text x="395.5" y="594" font-size="12" fill="#000" text-anchor="end" font-weight="normal" >0.5761905</text><text x="456.5" y="594" font-size="12" fill="#000" text-anchor="end" font-weight="normal" >0.738095</text><text x="529.5" y="594" font-size="12" fill="#000" text-anchor="end" font-weight="normal" >210</text><text x="624.5" y="594" font-size="12" fill="#000" text-anchor="end" font-weight="normal" >210</text><text x="704.5" y="594" font-size="12" fill="#000" text-anchor="end" font-weight="normal" >0</text><text x="776.5" y="594" font-size="12" fill="#000" text-anchor="end" font-weight="normal" >0.8235294</text><text x="868.5" y="594" font-size="12" fill="#000" text-anchor="end" font-weight="normal" >0.474509804</text><text x="873.5" y="594" font-size="12" fill="#000" text-anchor="start" font-weight="normal" >2.7.7.56|BioCAD00000726995</text><text x="1053.5" y="594" font-size="12" fill="#000" text-anchor="start" font-weight="normal" >b3643</text><text x="1175.5" y="594" font-size="12" fill="#000" text-anchor="start" font-weight="normal" >b3643</text><text x="123.5" y="611" font-size="12" fill="#000" text-anchor="end" font-weight="normal" >213</text><text x="196.5" y="611" font-size="12" fill="#000" text-anchor="end" font-weight="normal" >252</text><text x="251.5" y="611" font-size="12" fill="#000" text-anchor="end" font-weight="normal" >273</text><text x="322.5" y="611" font-size="12" fill="#000" text-anchor="end">2.00E<tspan dx="1.4">-</tspan><tspan dx="1.2">30</tspan></text><text x="395.5" y="611" font-size="12" fill="#000" text-anchor="end" font-weight="normal" >0.3413462</text><text x="456.5" y="611" font-size="12" fill="#000" text-anchor="end" font-weight="normal" >0.504808</text><text x="529.5" y="611" font-size="12" fill="#000" text-anchor="end" font-weight="normal" >208</text><text x="624.5" y="611" font-size="12" fill="#000" text-anchor="end" font-weight="normal" >208</text><text x="704.5" y="611" font-size="12" fill="#000" text-anchor="end" font-weight="normal" >0</text><text x="776.5" y="611" font-size="12" fill="#000" text-anchor="end" font-weight="normal" >0.9765258</text><text x="868.5" y="611" font-size="12" fill="#000" text-anchor="end" font-weight="normal" >0.333333333</text><text x="873.5" y="611" font-size="12" fill="#000" text-anchor="start" font-weight="normal" >3.1.3.18|BioCAD00000727004</text><text x="1053.5" y="611" font-size="12" fill="#000" text-anchor="start" font-weight="normal" >b3385</text><text x="1175.5" y="611" font-size="12" fill="#000" text-anchor="start" font-weight="normal" >b3385</text><text x="123.5" y="628" font-size="12" fill="#000" text-anchor="end" font-weight="normal" >317</text><text x="196.5" y="628" font-size="12" fill="#000" text-anchor="end" font-weight="normal" >329</text><text x="251.5" y="628" font-size="12" fill="#000" text-anchor="end" font-weight="normal" >575</text><text x="322.5" y="628" font-size="12" fill="#000" text-anchor="end">3.00E<tspan dx="1.4">-</tspan><tspan dx="1.2">73</tspan></text><text x="395.5" y="628" font-size="12" fill="#000" text-anchor="end" font-weight="normal" >0.3993711</text><text x="456.5" y="628" font-size="12" fill="#000" text-anchor="end" font-weight="normal" >0.625786</text><text x="529.5" y="628" font-size="12" fill="#000" text-anchor="end" font-weight="normal" >318</text><text x="624.5" y="628" font-size="12" fill="#000" text-anchor="end" font-weight="normal" >318</text><text x="704.5" y="628" font-size="12" fill="#000" text-anchor="end" font-weight="normal" >0</text><text x="776.5" y="628" font-size="12" fill="#000" text-anchor="end" font-weight="normal" >1.0031546</text><text x="868.5" y="628" font-size="12" fill="#000" text-anchor="end" font-weight="normal" >0.400630915</text><text x="873.5" y="628" font-size="12" fill="#000" text-anchor="start" font-weight="normal" >2.7.7.6|BioCAD00000727009</text><text x="1053.5" y="628" font-size="12" fill="#000" text-anchor="start" font-weight="normal" >b3295</text><text x="1175.5" y="628" font-size="12" fill="#000" text-anchor="start" font-weight="normal" >b3295</text><text x="123.5" y="645" font-size="12" fill="#000" text-anchor="end" font-weight="normal" >469</text><text x="196.5" y="645" font-size="12" fill="#000" text-anchor="end" font-weight="normal" >469</text><text x="251.5" y="645" font-size="12" fill="#000" text-anchor="end" font-weight="normal" >1391</text><text x="322.5" y="645" font-size="12" fill="#000" text-anchor="end" font-weight="normal" >0</text><text x="395.5" y="645" font-size="12" fill="#000" text-anchor="end" font-weight="normal" >0.5565032</text><text x="456.5" y="645" font-size="12" fill="#000" text-anchor="end" font-weight="normal" >0.720682</text><text x="529.5" y="645" font-size="12" fill="#000" text-anchor="end" font-weight="normal" >469</text><text x="624.5" y="645" font-size="12" fill="#000" text-anchor="end" font-weight="normal" >469</text><text x="704.5" y="645" font-size="12" fill="#000" text-anchor="end" font-weight="normal" >0</text><text x="776.5" y="645" font-size="12" fill="#000" text-anchor="end" font-weight="normal" >1</text><text x="868.5" y="645" font-size="12" fill="#000" text-anchor="end" font-weight="normal" >0.556503198</text><text x="873.5" y="645" font-size="12" fill="#000" text-anchor="start" font-weight="normal" >6.3.1.2|BioCAD00000727011</text><text x="1053.5" y="645" font-size="12" fill="#000" text-anchor="start" font-weight="normal" >b3870</text><text x="1175.5" y="645" font-size="12" fill="#000" text-anchor="start" font-weight="normal" >b3870</text><text x="123.5" y="662" font-size="12" fill="#000" text-anchor="end" font-weight="normal" >292</text><text x="196.5" y="662" font-size="12" fill="#000" text-anchor="end" font-weight="normal" >296</text><text x="251.5" y="662" font-size="12" fill="#000" text-anchor="end" font-weight="normal" >419</text><text x="322.5" y="662" font-size="12" fill="#000" text-anchor="end">2.00E<tspan dx="1.4">-</tspan><tspan dx="1.2">50</tspan></text><text x="395.5" y="662" font-size="12" fill="#000" text-anchor="end" font-weight="normal" >0.3655914</text><text x="456.5" y="662" font-size="12" fill="#000" text-anchor="end" font-weight="normal" >0.530466</text><text x="529.5" y="662" font-size="12" fill="#000" text-anchor="end" font-weight="normal" >279</text><text x="624.5" y="662" font-size="12" fill="#000" text-anchor="end" font-weight="normal" >279</text><text x="704.5" y="662" font-size="12" fill="#000" text-anchor="end" font-weight="normal" >0</text><text x="776.5" y="662" font-size="12" fill="#000" text-anchor="end" font-weight="normal" >0.9554795</text><text x="868.5" y="662" font-size="12" fill="#000" text-anchor="end" font-weight="normal" >0.349315068</text><text x="873.5" y="662" font-size="12" fill="#000" text-anchor="start" font-weight="normal" >2.5.1.141|BioCAD00000727013</text><text x="1053.5" y="662" font-size="12" fill="#000" text-anchor="start" font-weight="normal" >b0428</text><text x="1175.5" y="662" font-size="12" fill="#000" text-anchor="start" font-weight="normal" >b0428</text><text x="123.5" y="679" font-size="12" fill="#000" text-anchor="end" font-weight="normal" >775</text><text x="196.5" y="679" font-size="12" fill="#000" text-anchor="end" font-weight="normal" >711</text><text x="251.5" y="679" font-size="12" fill="#000" text-anchor="end" font-weight="normal" >802</text><text x="322.5" y="679" font-size="12" fill="#000" text-anchor="end">1.00E<tspan dx="1.4">-</tspan><tspan dx="1.2">09</tspan></text><text x="395.5" y="679" font-size="12" fill="#000" text-anchor="end" font-weight="normal" >0.4012162</text><text x="456.5" y="679" font-size="12" fill="#000" text-anchor="end" font-weight="normal" >0.594846</text><text x="529.5" y="679" font-size="12" fill="#000" text-anchor="end" font-weight="normal" >795</text><text x="624.5" y="679" font-size="12" fill="#000" text-anchor="end" font-weight="normal" >795</text><text x="704.5" y="679" font-size="12" fill="#000" text-anchor="end" font-weight="normal" >0</text><text x="776.5" y="679" font-size="12" fill="#000" text-anchor="end" font-weight="normal" >1.0258065</text><text x="868.5" y="679" font-size="12" fill="#000" text-anchor="end" font-weight="normal" >0.411570152</text><text x="873.5" y="679" font-size="12" fill="#000" text-anchor="start" font-weight="normal" >2.7.7.8|BioCAD00000727016</text><text x="1053.5" y="679" font-size="12" fill="#000" text-anchor="start" font-weight="normal" >b3164</text><text x="1175.5" y="679" font-size="12" fill="#000" text-anchor="start" font-weight="normal" >b3164</text><text x="123.5" y="696" font-size="12" fill="#000" text-anchor="end" font-weight="normal" >775</text><text x="196.5" y="696" font-size="12" fill="#000" text-anchor="end" font-weight="normal" >557</text><text x="251.5" y="696" font-size="12" fill="#000" text-anchor="end" font-weight="normal" >136.667</text><text x="322.5" y="696" font-size="12" fill="#000" text-anchor="end">1.05E<tspan dx="1.4">-</tspan><tspan dx="1.2">08</tspan></text><text x="395.5" y="696" font-size="12" fill="#000" text-anchor="end" font-weight="normal" >0.3333392</text><text x="456.5" y="696" font-size="12" fill="#000" text-anchor="end" font-weight="normal" >0.528271</text><text x="529.5" y="696" font-size="12" fill="#000" text-anchor="end" font-weight="normal" >467</text><text x="624.5" y="696" font-size="12" fill="#000" text-anchor="end" font-weight="normal" >467</text><text x="704.5" y="696" font-size="12" fill="#000" text-anchor="end" font-weight="normal" >0</text><text x="776.5" y="696" font-size="12" fill="#000" text-anchor="end" font-weight="normal" >0.6025806</text><text x="868.5" y="696" font-size="12" fill="#000" text-anchor="end" font-weight="normal" >0.200863737</text><text x="873.5" y="696" font-size="12" fill="#000" text-anchor="start" font-weight="normal" >2.7.7.8|BioCAD00000727016</text><text x="1053.5" y="696" font-size="12" fill="#000" text-anchor="start" font-weight="normal" >b0911</text><text x="1175.5" y="696" font-size="12" fill="#000" text-anchor="start" font-weight="normal" >b0911</text><text x="123.5" y="713" font-size="12" fill="#000" text-anchor="end" font-weight="normal" >0</text><text x="196.5" y="713" font-size="12" fill="#000" text-anchor="end" font-weight="normal" >0</text><text x="251.5" y="713" font-size="12" fill="#000" text-anchor="end" font-weight="normal" >0</text><text x="322.5" y="713" font-size="12" fill="#000" text-anchor="end" font-weight="normal" >0</text><text x="395.5" y="713" font-size="12" fill="#000" text-anchor="end" font-weight="normal" >0</text><text x="456.5" y="713" font-size="12" fill="#000" text-anchor="end" font-weight="normal" >0</text><text x="529.5" y="713" font-size="12" fill="#000" text-anchor="end" font-weight="normal" >0</text><text x="624.5" y="713" font-size="12" fill="#000" text-anchor="end" font-weight="normal" >0</text><text x="704.5" y="713" font-size="12" fill="#000" text-anchor="end" font-weight="normal" >0</text><text x="709.5" y="713" font-size="12" fill="#000" text-anchor="start" font-weight="normal" >NaN</text><text x="868.5" y="713" font-size="12" fill="#000" text-anchor="end" font-weight="normal" >0</text><text x="873.5" y="713" font-size="12" fill="#000" text-anchor="start" font-weight="normal" >3.2.2.-|BioCAD00000727017</text><text x="1053.5" y="713" font-size="12" fill="#000" text-anchor="start" font-weight="normal"  textLength="105.5" lengthAdjust="spacing">HITS_NOT_FOUND</text><text x="123.5" y="730" font-size="12" fill="#000" text-anchor="end" font-weight="normal" >0</text><text x="196.5" y="730" font-size="12" fill="#000" text-anchor="end" font-weight="normal" >0</text><text x="251.5" y="730" font-size="12" fill="#000" text-anchor="end" font-weight="normal" >0</text><text x="322.5" y="730" font-size="12" fill="#000" text-anchor="end" font-weight="normal" >0</text><text x="395.5" y="730" font-size="12" fill="#000" text-anchor="end" font-weight="normal" >0</text><text x="456.5" y="730" font-size="12" fill="#000" text-anchor="end" font-weight="normal" >0</text><text x="529.5" y="730" font-size="12" fill="#000" text-anchor="end" font-weight="normal" >0</text><text x="624.5" y="730" font-size="12" fill="#000" text-anchor="end" font-weight="normal" >0</text><text x="704.5" y="730" font-size="12" fill="#000" text-anchor="end" font-weight="normal" >0</text><text x="709.5" y="730" font-size="12" fill="#000" text-anchor="start" font-weight="normal" >NaN</text><text x="868.5" y="730" font-size="12" fill="#000" text-anchor="end" font-weight="normal" >0</text><text x="873.5" y="730" font-size="12" fill="#000" text-anchor="start" font-weight="normal" >4.2.99.18|BioCAD00000727017</text><text x="1053.5" y="730" font-size="12" fill="#000" text-anchor="start" font-weight="normal"  textLength="105.5" lengthAdjust="spacing">HITS_NOT_FOUND</text><text x="123.5" y="747" font-size="12" fill="#000" text-anchor="end" font-weight="normal" >0</text><text x="196.5" y="747" font-size="12" fill="#000" text-anchor="end" font-weight="normal" >0</text><text x="251.5" y="747" font-size="12" fill="#000" text-anchor="end" font-weight="normal" >0</text><text x="322.5" y="747" font-size="12" fill="#000" text-anchor="end" font-weight="normal" >0</text><text x="395.5" y="747" font-size="12" fill="#000" text-anchor="end" font-weight="normal" >0</text><text x="456.5" y="747" font-size="12" fill="#000" text-anchor="end" font-weight="normal" >0</text><text x="529.5" y="747" font-size="12" fill="#000" text-anchor="end" font-weight="normal" >0</text><text x="624.5" y="747" font-size="12" fill="#000" text-anchor="end" font-weight="normal" >0</text><text x="704.5" y="747" font-size="12" fill="#000" text-anchor="end" font-weight="normal" >0</text><text x="709.5" y="747" font-size="12" fill="#000" text-anchor="start" font-weight="normal" >NaN</text><text x="868.5" y="747" font-size="12" fill="#000" text-anchor="end" font-weight="normal" >0</text><text x="873.5" y="747" font-size="12" fill="#000" text-anchor="start" font-weight="normal" >4.1.2.50|BioCAD00000727018</text><text x="1053.5" y="747" font-size="12" fill="#000" text-anchor="start" font-weight="normal"  textLength="105.5" lengthAdjust="spacing">HITS_NOT_FOUND</text><text x="123.5" y="764" font-size="12" fill="#000" text-anchor="end" font-weight="normal" >0</text><text x="196.5" y="764" font-size="12" fill="#000" text-anchor="end" font-weight="normal" >0</text><text x="251.5" y="764" font-size="12" fill="#000" text-anchor="end" font-weight="normal" >0</text><text x="322.5" y="764" font-size="12" fill="#000" text-anchor="end" font-weight="normal" >0</text><text x="395.5" y="764" font-size="12" fill="#000" text-anchor="end" font-weight="normal" >0</text><text x="456.5" y="764" font-size="12" fill="#000" text-anchor="end" font-weight="normal" >0</text><text x="529.5" y="764" font-size="12" fill="#000" text-anchor="end" font-weight="normal" >0</text><text x="624.5" y="764" font-size="12" fill="#000" text-anchor="end" font-weight="normal" >0</text><text x="704.5" y="764" font-size="12" fill="#000" text-anchor="end" font-weight="normal" >0</text><text x="709.5" y="764" font-size="12" fill="#000" text-anchor="start" font-weight="normal" >NaN</text><text x="868.5" y="764" font-size="12" fill="#000" text-anchor="end" font-weight="normal" >0</text><text x="873.5" y="764" font-size="12" fill="#000" text-anchor="start" font-weight="normal" >3.5.4.28|BioCAD00000727032</text><text x="1053.5" y="764" font-size="12" fill="#000" text-anchor="start" font-weight="normal"  textLength="105.5" lengthAdjust="spacing">HITS_NOT_FOUND</text><text x="123.5" y="781" font-size="12" fill="#000" text-anchor="end" font-weight="normal" >0</text><text x="196.5" y="781" font-size="12" fill="#000" text-anchor="end" font-weight="normal" >0</text><text x="251.5" y="781" font-size="12" fill="#000" text-anchor="end" font-weight="normal" >0</text><text x="322.5" y="781" font-size="12" fill="#000" text-anchor="end" font-weight="normal" >0</text><text x="395.5" y="781" font-size="12" fill="#000" text-anchor="end" font-weight="normal" >0</text><text x="456.5" y="781" font-size="12" fill="#000" text-anchor="end" font-weight="normal" >0</text><text x="529.5" y="781" font-size="12" fill="#000" text-anchor="end" font-weight="normal" >0</text><text x="624.5" y="781" font-size="12" fill="#000" text-anchor="end" font-weight="normal" >0</text><text x="704.5" y="781" font-size="12" fill="#000" text-anchor="end" font-weight="normal" >0</text><text x="709.5" y="781" font-size="12" fill="#000" text-anchor="start" font-weight="normal" >NaN</text><text x="868.5" y="781" font-size="12" fill="#000" text-anchor="end" font-weight="normal" >0</text><text x="873.5" y="781" font-size="12" fill="#000" text-anchor="start" font-weight="normal" >3.5.4.31|BioCAD00000727032</text><text x="1053.5" y="781" font-size="12" fill="#000" text-anchor="start" font-weight="normal"  textLength="105.5" lengthAdjust="spacing">HITS_NOT_FOUND</text><text x="123.5" y="798" font-size="12" fill="#000" text-anchor="end" font-weight="normal" >0</text><text x="196.5" y="798" font-size="12" fill="#000" text-anchor="end" font-weight="normal" >0</text><text x="251.5" y="798" font-size="12" fill="#000" text-anchor="end" font-weight="normal" >0</text><text x="322.5" y="798" font-size="12" fill="#000" text-anchor="end" font-weight="normal" >0</text><text x="395.5" y="798" font-size="12" fill="#000" text-anchor="end" font-weight="normal" >0</text><text x="456.5" y="798" font-size="12" fill="#000" text-anchor="end" font-weight="normal" >0</text><text x="529.5" y="798" font-size="12" fill="#000" text-anchor="end" font-weight="normal" >0</text><text x="624.5" y="798" font-size="12" fill="#000" text-anchor="end" font-weight="normal" >0</text><text x="704.5" y="798" font-size="12" fill="#000" text-anchor="end" font-weight="normal" >0</text><text x="709.5" y="798" font-size="12" fill="#000" text-anchor="start" font-weight="normal" >NaN</text><text x="868.5" y="798" font-size="12" fill="#000" text-anchor="end" font-weight="normal" >0</text><text x="873.5" y="798" font-size="12" fill="#000" text-anchor="start" font-weight="normal" >2.1.1.140|BioCAD00000727034</text><text x="1053.5" y="798" font-size="12" fill="#000" text-anchor="start" font-weight="normal"  textLength="105.5" lengthAdjust="spacing">HITS_NOT_FOUND</text></g><clipPath id="gridclip"><rect x="39" y="240" width="1214" height="552"/></clipPath><rect x="1173" y="732" width="77" height="18" fill="none" stroke="#217346" stroke-width="2"/><rect x="1246" y="746" width="7" height="7" fill="#fff" /><rect x="1247" y="747" width="5" height="5" fill="#217346" /><rect x="1257" y="240" width="15" height="552" fill="#dadada" /><rect x="1257.5" y="225.5" width="14" height="14" fill="#fff" stroke="#ababab"/><path d="M1260 233 L1268 233 L1264 229 Z" fill="#606060"/><rect x="1257.5" y="240.5" width="14" height="16" fill="#fff" stroke="#ababab"/><rect x="1257.5" y="778.5" width="14" height="14" fill="#fff" stroke="#ababab"/><path d="M1260 785 L1268 785 L1264 789 Z" fill="#606060"/><path d="M42 803 L38 806.5 L42 810 Z" fill="#b4b4b4"/><path d="M69 803 L73 806.5 L69 810 Z" fill="#b4b4b4"/><rect x="113" y="792" width="105" height="24" fill="#fff" /><rect x="113" y="792" width="1" height="24" fill="#ababab" /><rect x="217" y="792" width="1" height="24" fill="#ababab" /><rect x="113" y="815" width="105" height="2" fill="#217346" /><text x="126.8" y="809.3" font-size="12.5" fill="#217346" text-anchor="start" font-weight="normal"  textLength="76.6" lengthAdjust="spacing">enzyme-ecoli</text><circle cx="258.5" cy="806" r="7" fill="none" stroke="#6e6e6e" stroke-width="1"/><rect x="254.5" y="805.5" width="8" height="1" fill="#6e6e6e" /><rect x="258" y="801.5" width="1" height="9" fill="#6e6e6e" /><rect x="771" y="800" width="1" height="2" fill="#a0a0a0" /><rect x="771" y="804" width="1" height="2" fill="#a0a0a0" /><rect x="771" y="808" width="1" height="2" fill="#a0a0a0" /><rect x="787" y="799" width="467" height="15" fill="#dadada" /><rect x="787.5" y="799.5" width="14" height="14" fill="#fff" stroke="#ababab"/><path d="M797 803 L797 810 L793 806.5 Z" fill="#606060"/><rect x="801.5" y="799.5" width="405" height="14" fill="#fff" stroke="#ababab"/><rect x="1239.5" y="799.5" width="14" height="14" fill="#fff" stroke="#ababab"/><path d="M1244 803 L1244 810 L1248 806.5 Z" fill="#606060"/><text x="19.3" y="836" font-size="10.5" fill="#444" text-anchor="start" font-weight="normal" >Ready</text><rect x="970" y="821" width="40" height="21" fill="#d2d0ce" /><text x="1235" y="836" font-size="10.5" fill="#444" text-anchor="start" font-weight="normal" >90%</text><rect x="1109" y="831" width="99" height="1" fill="#8a8a8a" /><rect x="1152" y="826" width="5" height="11" fill="#6e6e6e" /><rect x="1160" y="829" width="1" height="5" fill="#8a8a8a" /><rect x="1097" y="831" width="8" height="1" fill="#444" /><rect x="1214" y="831" width="9" height="1" fill="#444" /><rect x="1218" y="827" width="1" height="9" fill="#444" /><path d="M34.5 26.5 H49.5 V41.5 H36.5 L34.5 39.5 Z" fill="none" stroke="#fff" stroke-width="1"/><path d="M37.5 26.5 V30.5 H46.5 V26.5" fill="none" stroke="#fff" stroke-width="1"/><path d="M38.5 41.5 V36.5 H45.5 V41.5" fill="none" stroke="#fff" stroke-width="1"/><path d="M64.5 26.5 V32.5 H70" fill="none" stroke="#fff" stroke-width="1.1"/><path d="M64.8 32.2 C67.5 28.5 69.8 26.5 72.5 26.5 C76 26.5 78 29 78 31.5 C78 33.5 77 35 75.5 36.5 L69.5 42" fill="none" stroke="#fff" stroke-width="1.1"/><path d="M85.0 31.5 L87.5 34.1 L90.0 31.5" fill="none" stroke="#fff" stroke-width="1.3"/><g opacity="0.35"><path d="M116.5 26.5 V32.5 H111" fill="none" stroke="#fff" stroke-width="1.1"/><path d="M116.2 32.2 C113.5 28.5 111.2 26.5 108.5 26.5 C105 26.5 103 29 103 31.5 C103 33.5 104 35 105.5 36.5 L111.5 42" fill="none" stroke="#fff" stroke-width="1.1"/></g><path d="M124.0 31.5 L126.5 34.1 L129.0 31.5" fill="none" stroke="rgba(255,255,255,0.35)" stroke-width="1"/><rect x="144" y="29" width="8" height="1.2" fill="#fff"/><path d="M145.0 32.2 L148 35.2 L151.0 32.2" fill="none" stroke="#fff" stroke-width="1.3"/><circle cx="511" cy="30.5" r="4.3" fill="none" stroke="#1c5e3a" stroke-width="1.1"/><path d="M507.8 33.7 L502.5 39.5" stroke="#1c5e3a" stroke-width="1.2"/><circle cx="1067" cy="33" r="12" fill="#fff"/><path d="M1061.5 30.2 C1058.5 31.8 1057.2 34.8 1057.3 38 C1057.8 42 1061.8 44.6 1067 44.6 C1072.2 44.6 1076.3 42 1076.6 38 C1076.9 34.5 1075.5 31.8 1072.8 29.8" fill="none" stroke="#111" stroke-width="1.1"/><path d="M1061.5 30.2 C1063 29.5 1064.5 29.2 1066 29 C1065.8 25 1066.8 22.3 1068.3 22.3 C1069.8 22.3 1070.2 25 1069.6 28.6 C1070.8 26 1072.6 23.6 1074.3 23.6 C1075.8 23.6 1075.6 26.5 1072.8 29.8" fill="none" stroke="#111" stroke-width="1.1"/><path d="M1061.5 35.5 q1.2 1.2 2.4 0 M1065.8 35.8 h2.2" stroke="#666" stroke-width="0.7" fill="none"/><rect x="1107.5" y="27.5" width="12" height="9" fill="none" stroke="#fff"/><rect x="1108" y="29" width="11" height="1" fill="#fff"/><path d="M1113.5 36.5 V31.5 M1111.2 33.8 L1113.5 31.5 L1115.8 33.8" fill="none" stroke="#fff" stroke-width="1.2"/><rect x="1155" y="31" width="10" height="1" fill="#fff"/><rect x="1201.5" y="27.5" width="9" height="9" fill="none" stroke="#fff"/><path d="M1247 27 L1257 37 M1257 27 L1247 37" stroke="#fff" stroke-width="1.1"/><path d="M1203.5 63 V70.5 H1213 V66.5" fill="none" stroke="#217346" stroke-width="1.1"/><path d="M1206 67.5 C1206.5 63.5 1209 62 1213 62 M1210.5 59.5 L1214 62 L1211 64.8" fill="none" stroke="#217346" stroke-width="1.1"/><rect x="31.5" y="92.5" width="20" height="23" fill="#f8de95" stroke="#d86c00"/><rect x="33.5" y="94.5" width="16" height="19" fill="#f9f9f9"/><path d="M35.5 91.5 H38.5 C39 89 40.5 88 41.5 88 C42.5 88 44 89 44.5 91.5 H47.5 V95.5 H35.5 Z" fill="#fff" stroke="#6a6a6a"/><rect x="44.5" y="100.5" width="13" height="17" fill="#fafafa" stroke="#3c3c3c" stroke-width="1.2"/><path d="M38.5 143 L41.5 146 L44.5 143" fill="none" stroke="#444444" stroke-width="1"/><path d="M71.5 87.5 L76 100 M76.5 87.5 L72 100" stroke="#555" stroke-width="0.9" fill="none"/><circle cx="71" cy="101" r="1.8" fill="#dcebf7" stroke="#2b88d8" stroke-width="1.2"/><circle cx="77" cy="101" r="1.8" fill="#dcebf7" stroke="#2b88d8" stroke-width="1.2"/><path d="M73 111.5 H66.5 V124.5 H72" fill="none" stroke="#3c3c3c" stroke-width="1.1"/><path d="M72.5 114.5 H77.5 L81.5 118.5 V126.5 H72.5 Z" fill="#fafafa" stroke="#3c3c3c" stroke-width="1.1"/><path d="M77.5 114.5 V118.5 H81.5" fill="none" stroke="#3c3c3c"/><path d="M75 121.5 H79 M75 123.5 H79" stroke="#555" stroke-width="0.8"/><path d="M89.0 118 L91.5 121 L94.0 118" fill="none" stroke="#444444" stroke-width="1"/><g transform="translate(74.3,142.2) rotate(45) scale(0.86)"><path d="M-5 -1 L5 -1 L6 7 L-6 7 Z" fill="#fff" stroke="#e07800" stroke-width="1.1"/><path d="M-2 4 L2 4 L3 7 L-3 7 Z" fill="#f6c95c"/><rect x="-4.5" y="-4" width="9" height="3" fill="#fff" stroke="#3c3c3c"/><rect x="-1.5" y="-10" width="3" height="6" fill="#fff" stroke="#3c3c3c"/></g><path d="M97.5 170.5 V165.0 H103 M99.5 167.0 L104 171.5 M104 168.0 V171.5 H100.5" fill="none" stroke="#605e5c" stroke-width="0.9"/><path d="M376.0 170.5 V165.0 H381.5 M378.0 167.0 L382.5 171.5 M382.5 168.0 V171.5 H379.0" fill="none" stroke="#605e5c" stroke-width="0.9"/><path d="M557.5 170.5 V165.0 H563 M559.5 167.0 L564 171.5 M564 168.0 V171.5 H560.5" fill="none" stroke="#605e5c" stroke-width="0.9"/><path d="M713.5 170.5 V165.0 H719 M715.5 167.0 L720 171.5 M720 168.0 V171.5 H716.5" fill="none" stroke="#605e5c" stroke-width="0.9"/><path d="M1256.5 172 L1261 167.5 L1265.5 172" fill="none" stroke="#444" stroke-width="1"/><path d="M276.55 102.5 L279.3 105.5 L282.05 102.5" fill="none" stroke="#444444" stroke-width="1"/><path d="M321.55 102.5 L324.3 105.5 L327.05 102.5" fill="none" stroke="#444444" stroke-width="1"/><text x="337" y="108" font-size="15" fill="#444">A</text><path d="M348 99.5 L350 97 L352 99.5" fill="none" stroke="#2b88d8" stroke-width="1.1"/><text x="362.5" y="108" font-size="12.5" fill="#444">A</text><path d="M372.5 96.5 L374.5 98.7 L376.5 96.5" fill="none" stroke="#2b88d8" stroke-width="1.1"/><text x="124.3" y="139" font-size="12" font-weight="bold" fill="#444" textLength="7.8" lengthAdjust="spacingAndGlyphs">B</text><path d="M151.5 129.5 L149 139" stroke="#444" stroke-width="1.1"/><path d="M149.5 129.3 H154 M147 139.2 H151.5" stroke="#444" stroke-width="0.9"/><text x="171" y="139" font-size="12.5" fill="#444">U</text><rect x="171" y="140.5" width="9" height="1" fill="#444"/><path d="M190.9 134 L193.4 137 L195.9 134" fill="none" stroke="#444444" stroke-width="1"/><rect x="206" y="125" width="1" height="20" fill="#c8c6c4"/><rect x="214" y="127" width="1" height="1" fill="#444"/><rect x="214" y="134" width="1" height="1" fill="#444"/><rect x="216" y="127" width="1" height="1" fill="#444"/><rect x="216" y="134" width="1" height="1" fill="#444"/><rect x="218" y="127" width="1" height="1" fill="#444"/><rect x="218" y="134" width="1" height="1" fill="#444"/><rect x="220" y="127" width="1" height="1" fill="#444"/><rect x="220" y="134" width="1" height="1" fill="#444"/><rect x="222" y="127" width="1" height="1" fill="#444"/><rect x="222" y="134" width="1" height="1" fill="#444"/><rect x="224" y="127" width="1" height="1" fill="#444"/><rect x="224" y="134" width="1" height="1" fill="#444"/><rect x="226" y="127" width="1" height="1" fill="#444"/><rect x="226" y="134" width="1" height="1" fill="#444"/><rect x="228" y="127" width="1" height="1" fill="#444"/><rect x="228" y="134" width="1" height="1" fill="#444"/><rect x="214" y="127" width="1" height="1" fill="#444"/><rect x="228" y="127" width="1" height="1" fill="#444"/><rect x="221" y="127" width="1" height="1" fill="#444"/><rect x="214" y="129" width="1" height="1" fill="#444"/><rect x="228" y="129" width="1" height="1" fill="#444"/><rect x="221" y="129" width="1" height="1" fill="#444"/><rect x="214" y="131" width="1" height="1" fill="#444"/><rect x="228" y="131" width="1" height="1" fill="#444"/><rect x="221" y="131" width="1" height="1" fill="#444"/><rect x="214" y="133" width="1" height="1" fill="#444"/><rect x="228" y="133" width="1" height="1" fill="#444"/><rect x="221" y="133" width="1" height="1" fill="#444"/><rect x="214" y="135" width="1" height="1" fill="#444"/><rect x="228" y="135" width="1" height="1" fill="#444"/><rect x="221" y="135" width="1" height="1" fill="#444"/><rect x="214" y="137" width="1" height="1" fill="#444"/><rect x="228" y="137" width="1" height="1" fill="#444"/><rect x="221" y="137" width="1" height="1" fill="#444"/><rect x="214" y="139" width="1" height="1" fill="#444"/><rect x="228" y="139" width="1" height="1" fill="#444"/><rect x="221" y="139" width="1" height="1" fill="#444"/><rect x="214" y="140.5" width="15" height="1.5" fill="#222"/><path d="M237.1 134 L239.6 137 L242.1 134" fill="none" stroke="#444444" stroke-width="1"/><rect x="252" y="125" width="1" height="20" fill="#c8c6c4"/><path d="M262.8 133.7 L268.6 127.6 L272.1 132.7 L267.2 137.7 Z" fill="#fafafa" stroke="#333" stroke-width="1.1" stroke-linejoin="round"/><path d="M269.3 127.5 V132.6" stroke="#333" stroke-width="1.1"/><path d="M271.8 130.6 C273.6 130.3 274.7 132.2 274.4 134.6 L273.9 137" fill="none" stroke="#1f6fc5" stroke-width="1.5"/><rect x="260" y="139" width="16" height="4" fill="#ffff00"/><path d="M282.75 133.9 L285.5 136.6 L288.25 133.9" fill="none" stroke="#444444" stroke-width="1"/><path d="M302.9 137.6 L307.3 127.3 L311.7 137.6 M304.6 133.7 H310" fill="none" stroke="#333" stroke-width="1.1"/><rect x="299" y="139" width="16" height="4" fill="#ff0000"/><path d="M321.8 134 L324.3 137 L326.8 134" fill="none" stroke="#444444" stroke-width="1"/><rect x="337" y="125" width="1" height="20" fill="#c8c6c4"/><text x="344.6" y="133.6" font-size="9" fill="#777" textLength="12.6" lengthAdjust="spacingAndGlyphs">abc</text><text x="352" y="142.5" font-size="14" font-style="italic" fill="#2b88d8">A</text><path d="M367.8 134 L370.3 137 L372.8 134" fill="none" stroke="#444444" stroke-width="1"/><rect x="399" y="95" width="14" height="1.1" fill="#3a3a3a"/><rect x="401" y="99" width="10" height="1.1" fill="#3a3a3a"/><rect x="399" y="103" width="14" height="1.1" fill="#3a3a3a"/><rect x="423" y="98" width="14" height="1.1" fill="#3a3a3a"/><rect x="425" y="102" width="10" height="1.1" fill="#3a3a3a"/><rect x="423" y="106" width="14" height="1.1" fill="#3a3a3a"/><rect x="447" y="102" width="14" height="1.1" fill="#3a3a3a"/><rect x="449" y="106" width="10" height="1.1" fill="#3a3a3a"/><rect x="447" y="110" width="14" height="1.1" fill="#3a3a3a"/><text x="0" y="0" font-size="9" fill="#444" transform="translate(474,106) rotate(-45)">ab</text><path d="M476 109.5 L486 99.5 M482 99.5 H486 V103.5" fill="none" stroke="#2b88d8" stroke-width="1.1"/><path d="M492.0 102.5 L494.5 105.5 L497.0 102.5" fill="none" stroke="#444444" stroke-width="1"/><rect x="399" y="128" width="14" height="1.1" fill="#3a3a3a"/><rect x="423" y="128" width="14" height="1.1" fill="#3a3a3a"/><rect x="447" y="128" width="14" height="1.1" fill="#3a3a3a"/><rect x="399" y="132" width="10" height="1.1" fill="#3a3a3a"/><rect x="425" y="132" width="10" height="1.1" fill="#3a3a3a"/><rect x="451" y="132" width="10" height="1.1" fill="#3a3a3a"/><rect x="399" y="136" width="14" height="1.1" fill="#3a3a3a"/><rect x="423" y="136" width="14" height="1.1" fill="#3a3a3a"/><rect x="447" y="136" width="14" height="1.1" fill="#3a3a3a"/><rect x="399" y="140" width="10" height="1.1" fill="#3a3a3a"/><rect x="425" y="140" width="10" height="1.1" fill="#3a3a3a"/><rect x="451" y="140" width="10" height="1.1" fill="#3a3a3a"/><rect x="472" y="128" width="14" height="1.1" fill="#3a3a3a"/><rect x="496" y="128" width="14" height="1.1" fill="#3a3a3a"/><rect x="472" y="140" width="14" height="1.1" fill="#3a3a3a"/><rect x="496" y="140" width="14" height="1.1" fill="#3a3a3a"/><rect x="480" y="132" width="6" height="1.1" fill="#3a3a3a"/><rect x="504" y="132" width="6" height="1.1" fill="#3a3a3a"/><rect x="480" y="136" width="6" height="1.1" fill="#3a3a3a"/><rect x="504" y="136" width="6" height="1.1" fill="#3a3a3a"/><path d="M478 134.5 H472.8 M475 132 L472.5 134.5 L475 137" fill="none" stroke="#2b88d8" stroke-width="1.3"/><path d="M496 134.5 H501.2 M499 132 L501.5 134.5 L499 137" fill="none" stroke="#2b88d8" stroke-width="1.3"/><rect x="518" y="90" width="1" height="58" fill="#c8c6c4"/><text x="527.5" y="103" font-size="9" fill="#444">ab</text><text x="527.5" y="111" font-size="9" fill="#444">c</text><path d="M533.5 107.5 H540 C541.5 107.5 542 106 542 105 M536 105 L533.5 107.5 L536 110" fill="none" stroke="#2b88d8" stroke-width="1.1"/><rect x="526.5" y="127.5" width="14" height="14" fill="none" stroke="#444"/><rect x="526.5" y="130.5" width="14" height="8" fill="#fff" stroke="#2b88d8"/><path d="M533.5 128 V130 M533.5 139 V141" stroke="#444"/><path d="M529 134.5 H538 M531 132.3 L528.8 134.5 L531 136.7 M536 132.3 L538.2 134.5 L536 136.7" fill="none" stroke="#2b88d8" stroke-width="1.4"/><path d="M549.1 134 L551.6 137 L554.1 134" fill="none" stroke="#444444" stroke-width="1"/><path d="M707.55 102.5 L710.3 105.5 L713.05 102.5" fill="none" stroke="#444444" stroke-width="1"/><text x="583.5" y="141" font-size="15" fill="#444" font-family="Liberation Sans">$</text><path d="M603.2 134 L605.7 137 L608.2 134" fill="none" stroke="#444444" stroke-width="1"/><text x="619" y="141.5" font-size="15.5" fill="#444">%</text><path d="M651 130 C654 129 656 131.5 655 135 C654.5 137.5 652.5 139.5 649.5 141" fill="none" stroke="#333" stroke-width="1.6"/><circle cx="651.5" cy="132" r="2.3" fill="#333"/><rect x="666" y="125" width="1" height="21" fill="#c8c6c4"/><path d="M674 131.5 H680.5 M676.5 129 L674 131.5 L676.5 134" fill="none" stroke="#2b88d8" stroke-width="1.1"/><text x="681.5" y="134" font-size="9" fill="#444">0</text><text x="676" y="142" font-size="9" fill="#444">.00</text><text x="699" y="134" font-size="9" fill="#444">.00</text><text x="706" y="142" font-size="9" fill="#444">.0</text><path d="M698 139.5 H705 M702.5 137 L705 139.5 L702.5 142" fill="none" stroke="#2b88d8" stroke-width="1.1"/><rect x="756.5" y="91.5" width="27" height="21" fill="#fff" stroke="#333"/><rect x="761.5" y="91.5" width="12" height="7" fill="#f4a0a8" stroke="#d92c2c"/><rect x="761.5" y="105.5" width="14" height="7" fill="#f4a0a8" stroke="#d92c2c"/><rect x="761.5" y="98.5" width="8" height="7" fill="#8cc3ef" stroke="#1a73c8"/><path d="M756.5 98.5 H761 M770 98.5 H783.5 M756.5 105.5 H761 M770 105.5 H783.5 M778.5 91.5 V112.5" stroke="#333" fill="none"/><path d="M798.0 143.3 L800.5 146.10000000000002 L803.0 143.3" fill="none" stroke="#444444" stroke-width="1"/><g transform="translate(822,91)"><rect x="0.5" y="0.5" width="28" height="21" fill="#fff" stroke="#333"/><rect x="9.5" y="7.5" width="19" height="14" fill="#8cc3ef" stroke="#2b88d8"/><path d="M0 7.5 H29 M0 14.5 H29 M9.5 0 V22 M19.5 0 V22" stroke="#333" fill="none"/><path d="M29.5 7.5 L17 20" stroke="#333" stroke-width="3.4" stroke-linecap="round"/><path d="M29.5 7.5 L17 20" stroke="#fff" stroke-width="1.6" stroke-linecap="round"/><path d="M8.5 26.5 C9 22.5 11.5 19.5 15 19.5 C17.5 19.5 18.8 21 18.2 23 C17.2 25.8 13 27 8.5 26.5 Z" fill="#2b88d8"/></g><path d="M848.7 143.3 L851.2 146.10000000000002 L853.7 143.3" fill="none" stroke="#444444" stroke-width="1"/><g transform="translate(874,91)"><rect x="0.5" y="0.5" width="28" height="21" fill="#fff" stroke="#333"/><rect x="5.5" y="5.5" width="20" height="13" fill="#8cc3ef" stroke="#2b88d8"/><path d="M0 5.5 H5 M0 18.5 H5 M5.5 0 V5 M25.5 0 V5 M5.5 18 V22" stroke="#333" fill="none"/><path d="M29.5 7.5 L17 20" stroke="#333" stroke-width="3.4" stroke-linecap="round"/><path d="M29.5 7.5 L17 20" stroke="#fff" stroke-width="1.6" stroke-linecap="round"/><path d="M8.5 26.5 C9 22.5 11.5 19.5 15 19.5 C17.5 19.5 18.8 21 18.2 23 C17.2 25.8 13 27 8.5 26.5 Z" fill="#2b88d8"/></g><path d="M901.0 143.3 L903.5 146.10000000000002 L906.0 143.3" fill="none" stroke="#444444" stroke-width="1"/><rect x="930.5" y="87.5" width="15" height="13" fill="#fff" stroke="#333"/><path d="M930.5 91.5 H945.5 M930.5 96.5 H945.5 M935.5 87.5 V100.5 M940.5 87.5 V100.5" stroke="#333" fill="none"/><rect x="935.5" y="91.5" width="10" height="5" fill="#8cc3ef" stroke="#1a73c8"/><path d="M931.5 94 H940 M934 91.2 L931.2 94 L934 96.8" stroke="#2b88d8" stroke-width="1.2" fill="none"/><path d="M988.9 93.2 L991.4 96.0 L993.9 93.2" fill="none" stroke="#444444" stroke-width="1"/><rect x="930.5" y="110.5" width="15" height="13" fill="#fff" stroke="#333"/><path d="M930.5 113.5 H945.5 M930.5 119.5 H945.5 M935.5 110.5 V113.5 M940.5 110.5 V113.5 M935.5 119.5 V123.5 M940.5 119.5 V123.5" stroke="#333" fill="none"/><rect x="933.5" y="113.5" width="5" height="6" fill="#8cc3ef" stroke="#1a73c8"/><rect x="939" y="112.5" width="7" height="8" fill="#fff"/><path d="M940.2 114 L945.5 119.5 M945.5 114 L940.2 119.5" stroke="#e8403a" stroke-width="1.1"/><path d="M993.0 116.2 L995.5 119.0 L998.0 116.2" fill="none" stroke="#444444" stroke-width="1"/><rect x="930.5" y="134.5" width="15" height="13" fill="#fff" stroke="#333"/><path d="M930.5 138.5 H945.5 M930.5 143.5 H945.5 M933.5 134.5 V147.5 M942.5 134.5 V147.5" stroke="#333" fill="none"/><rect x="933.5" y="138.5" width="9" height="5" fill="#8cc3ef" stroke="#1a73c8"/><rect x="931" y="131" width="14" height="3" fill="#f3f2f1"/><path d="M933.5 133 H942.5 M933.5 131.5 V134.5 M942.5 131.5 V134.5" stroke="#2b88d8" stroke-width="1"/><path d="M991.2 139 L993.7 141.8 L996.2 139" fill="none" stroke="#444444" stroke-width="1"/><path d="M1038 88.8 V87.5 H1026.5 L1032.5 94 L1026.5 100.3 H1038 V99" fill="none" stroke="#333" stroke-width="1.1"/><path d="M1047.1 93.2 L1049.6 96.0 L1052.1 93.2" fill="none" stroke="#444444" stroke-width="1"/><rect x="1024.5" y="110.5" width="15" height="13" fill="#fafafa" stroke="#333" stroke-width="1.1"/><rect x="1024.5" y="112" width="15" height="1" fill="#333"/><path d="M1031.5 114 V121.5 M1028.5 118.5 L1031.5 121.5 L1034.5 118.5" fill="none" stroke="#2b88d8" stroke-width="1.2"/><path d="M1045.1 116.2 L1047.6 119.0 L1050.1 116.2" fill="none" stroke="#444444" stroke-width="1"/><path d="M1024.6 141.8 L1033.9 133 L1039.4 138.3 L1029.6 147.2 Z" fill="#fafafa" stroke="#a33db4" stroke-width="1.2"/><path d="M1024.6 141.8 L1028.2 138.4 L1033 143.3 L1029.6 147.2 Z" fill="#d69be0" stroke="#a33db4" stroke-width="1.1"/><path d="M1045.1 139 L1047.6 141.8 L1050.1 139" fill="none" stroke="#444444" stroke-width="1"/><path d="M1066.5 100.5 L1071 89.5 L1075.5 100.5 M1068.2 96.5 H1073.8" fill="none" stroke="#2b88d8" stroke-width="1.4"/><path d="M1066.8 103.5 H1074.5 L1066.8 114.5 H1075" fill="none" stroke="#333" stroke-width="1.2"/><path d="M1078.5 95.5 H1093.5 V97.5 L1087.7 103.5 V110 H1084.3 V103.5 L1078.5 97.5 Z" fill="#f8f8f8" stroke="#333" stroke-width="1.1"/><path d="M1091.0 143.3 L1093.5 146.10000000000002 L1096.0 143.3" fill="none" stroke="#444444" stroke-width="1"/><circle cx="1129" cy="97.5" r="8.3" fill="none" stroke="#333" stroke-width="1.1"/><path d="M1123 103.5 L1109 116.5" stroke="#333" stroke-width="1.2"/><path d="M1139.1 143.3 L1141.6 146.10000000000002 L1144.1 143.3" fill="none" stroke="#444444" stroke-width="1"/><g><circle cx="1183.5" cy="104.9" r="4.5" fill="none" stroke="#26b7f5" stroke-width="3"/><path d="M1192.5 103 A4.5 4.5 0 1 1 1194.6 108.4" fill="none" stroke="#12a7f7" stroke-width="3"/><path d="M1186 109 L1191.5 103.5" stroke="#26b7f5" stroke-width="3"/><circle cx="1190.3" cy="97.3" r="4.9" fill="none" stroke="#2ec0f7" stroke-width="3.1"/><path d="M1185.4 97.3 A4.9 4.9 0 0 0 1195.2 97.3" fill="none" stroke="#f2506f" stroke-width="3.1"/></g><path transform="translate(627.00,59) scale(0.9833)" d="M0.5 0.8 H11.5 M5.5 0.8 L4 3.5 M2.5 3.5 V12 M2.5 3.8 H9.5 V12 M2.5 7.6 H9.5 M2.5 11.5 H9.5" fill="none" stroke="#444" stroke-width="1.017"/><path transform="translate(639.60,59) scale(0.9833)" d="M6 -0.3 V1.5 M1.5 1.8 H11.5 M1.8 1.8 V6 C1.8 9 1.3 10.5 0.3 12 M3 4.2 H11 M5 2.5 V6.8 M8.5 2.5 V6.8 M5 6.6 H8.5 M3.5 8.3 H9.2 C8 10.3 6 11.3 3 12 M5 9.2 C7 10.7 9 11.5 11.5 12" fill="none" stroke="#444" stroke-width="1.017"/><path transform="translate(652.20,59) scale(0.9833)" d="M1.5 12 V1 H10.5 V11 C10.5 11.8 10 12 9 12 M3 3.5 L6 9 M6 3.5 L3 10 M6.5 3.5 L9.5 9 M9.5 3.5 L6.5 10" fill="none" stroke="#444" stroke-width="1.017"/><path transform="translate(664.80,59) scale(0.9833)" d="M4 -0.2 L3 1.8 M2.2 1.8 H9.8 V6.5 M2.2 1.8 V6 C2.2 6.8 1.7 7.3 1 7.8 M0.5 4.5 H11.5 M5.5 2.6 V3.8 M6 5.2 L7 6.3 M2 8.2 H10 V11.5 M2 8.2 V11.5 M4.6 8.2 V11.5 M7.4 8.2 V11.5 M0.5 11.6 H11.5" fill="none" stroke="#444" stroke-width="1.017"/><path transform="translate(120.00,98.5) scale(0.9167)" d="M2.5 0 L0.5 3 M1.5 1.5 H5.5 M3.6 1.5 L4.6 3 M8 0 L6 3 M7 1.5 H11.5 M9.1 1.5 L10.1 3 M2 4.6 H10 M6 3.2 V6.6 M0.5 6.6 H11.5 M1 8.6 H11 M8.6 7 V11 C8.6 11.8 8.2 12 7.2 12 M3.6 9.6 L5 11" fill="none" stroke="#262626" stroke-width="1.150"/><path transform="translate(132.20,98.5) scale(0.9167)" d="M3.2 0.3 L0.8 4.3 H3.6 M3.8 3.2 L0.6 8 H4.2 M0.5 11.3 L4.6 9.6 M5 3.2 H11 M5 6.6 H11.6 M7 0.3 C7.5 6 9.5 10 12 12 M10.6 8.4 L6.8 11.6 M9.6 0.4 L11 2" fill="none" stroke="#262626" stroke-width="1.150"/><path transform="translate(1173.00,123) scale(0.8750)" d="M3 0 L0.5 5.5 M2 3.2 V12 M5 1.2 H10.8 V5.2 H5 Z M4 7.2 H12 M7.9 5.2 V12 M7.6 7.5 L4.2 11.5 M8.2 7.5 L11.8 11.5" fill="none" stroke="#444" stroke-width="1.143"/><path transform="translate(1184.80,123) scale(0.8750)" d="M0.5 3 H11.5 M5.2 0.3 C4.2 5 2.7 8 0.5 10.2 M3 6.3 V12 M5.8 5.2 H10.5 L8.2 7.3 M8.2 7.2 V11.2 C8.2 11.9 7.8 12 6.8 12 M4.8 8.6 H11.6" fill="none" stroke="#444" stroke-width="1.143"/><path transform="translate(1196.60,123) scale(0.8750)" d="M0.5 1 H8 M4.2 1 L1.8 5.2 H7.6 M6.2 3.6 L7.8 5.6 M4.6 5.2 V11.5 M1.6 8.2 H7.6 M0.5 11.5 H8.5 M9.6 2 V9 M11.5 0.3 V11 C11.5 11.8 11 12 10 12" fill="none" stroke="#444" stroke-width="1.143"/><path transform="translate(1167.00,139) scale(0.9167)" d="M0.5 0.8 H11.5 M5.5 0.8 L4 3.5 M2.5 3.5 V12 M2.5 3.8 H9.5 V12 M2.5 7.6 H9.5 M2.5 11.5 H9.5" fill="none" stroke="#444" stroke-width="1.091"/><path transform="translate(1179.00,139) scale(0.9167)" d="M6 -0.3 V1.5 M1.5 1.8 H11.5 M1.8 1.8 V6 C1.8 9 1.3 10.5 0.3 12 M3 4.2 H11 M5 2.5 V6.8 M8.5 2.5 V6.8 M5 6.6 H8.5 M3.5 8.3 H9.2 C8 10.3 6 11.3 3 12 M5 9.2 C7 10.7 9 11.5 11.5 12" fill="none" stroke="#444" stroke-width="1.091"/><path transform="translate(1191.00,139) scale(0.9167)" d="M1.5 12 V1 H10.5 V11 C10.5 11.8 10 12 9 12 M3 3.5 L6 9 M6 3.5 L3 10 M6.5 3.5 L9.5 9 M9.5 3.5 L6.5 10" fill="none" stroke="#444" stroke-width="1.091"/><path transform="translate(1203.00,139) scale(0.9167)" d="M4 -0.2 L3 1.8 M2.2 1.8 H9.8 V6.5 M2.2 1.8 V6 C2.2 6.8 1.7 7.3 1 7.8 M0.5 4.5 H11.5 M5.5 2.6 V3.8 M6 5.2 L7 6.3 M2 8.2 H10 V11.5 M2 8.2 V11.5 M4.6 8.2 V11.5 M7.4 8.2 V11.5 M0.5 11.6 H11.5" fill="none" stroke="#444" stroke-width="1.091"/><path transform="translate(1179.50,164) scale(0.7500)" d="M3 0 L0.5 5.5 M2 3.2 V12 M5 1.2 H10.8 V5.2 H5 Z M4 7.2 H12 M7.9 5.2 V12 M7.6 7.5 L4.2 11.5 M8.2 7.5 L11.8 11.5" fill="none" stroke="#444" stroke-width="1.333"/><path transform="translate(1190.70,164) scale(0.7500)" d="M0.5 3 H11.5 M5.2 0.3 C4.2 5 2.7 8 0.5 10.2 M3 6.3 V12 M5.8 5.2 H10.5 L8.2 7.3 M8.2 7.2 V11.2 C8.2 11.9 7.8 12 6.8 12 M4.8 8.6 H11.6" fill="none" stroke="#444" stroke-width="1.333"/><g transform="translate(983,825)"><rect x="0.5" y="0.5" width="12" height="12" fill="none" stroke="#444"/><path d="M4.5 0 V13 M8.5 0 V13 M0 4.5 H13 M0 8.5 H13" stroke="#444"/></g><g transform="translate(1023,825)"><rect x="0.5" y="0.5" width="13" height="12" fill="none" stroke="#444"/><rect x="3.5" y="2.5" width="7" height="8" fill="none" stroke="#444"/><path d="M5 5 H9 M5 7 H9" stroke="#444"/></g><g transform="translate(1063,825)"><path d="M0.5 0.5 H13.5 V12.5 H0.5 Z M4.5 0.5 V7.5 H0.5 M4.5 7.5 H8.5 V0.5" fill="none" stroke="#444"/></g><path d="M106.5 197.5 H112.5 L109.5 200.8 Z" fill="#6e6e6e"/><rect x="134.5" y="195" width="1.2" height="2" fill="#a6a6a6"/><rect x="134.5" y="199" width="1.2" height="2" fill="#a6a6a6"/><rect x="134.5" y="203" width="1.2" height="2" fill="#a6a6a6"/><path d="M164 196.5 L174 205 M174 196.5 L164 205" stroke="#b4b4b4" stroke-width="1.2"/><path d="M199.5 201 L203.5 205 L211.5 196.5" fill="none" stroke="#b4b4b4" stroke-width="1.6"/><text x="235" y="204.5" font-size="12.5" font-style="italic" font-weight="bold" fill="#555" font-family="Liberation Serif">f</text><text x="240.5" y="204.5" font-size="9.5" font-style="italic" font-weight="bold" fill="#555" font-family="Liberation Serif">x</text><path d="M1258 197.5 L1261.5 201 L1265 197.5" fill="none" stroke="#6e6e6e" stroke-width="1.7"/></svg></body></html>
